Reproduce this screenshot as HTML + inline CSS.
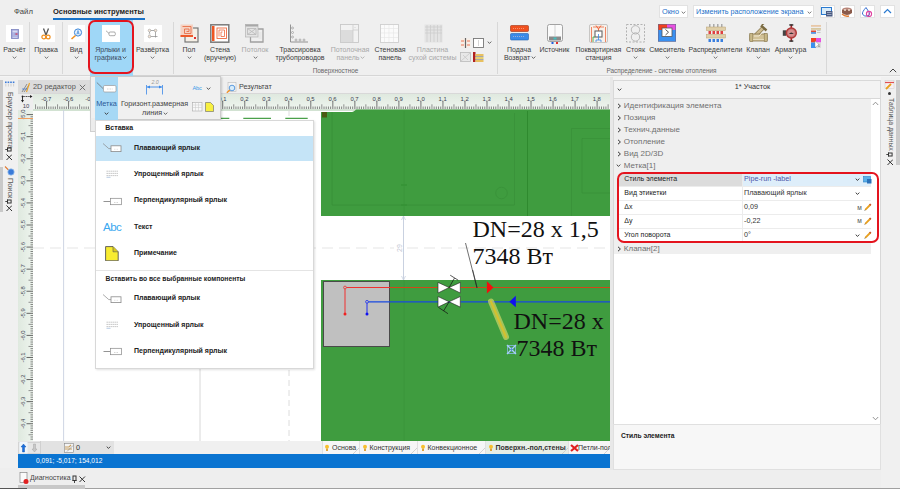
<!DOCTYPE html><html><head><meta charset="utf-8"><style>
html,body{margin:0;padding:0;}
body{width:900px;height:489px;overflow:hidden;position:relative;background:#eeeeee;font-family:"Liberation Sans", sans-serif;}
div{position:absolute;box-sizing:border-box;}
</style></head><body>
<div style="left:0px;top:0px;width:900px;height:76px;background:#efefef;"></div>
<div style="left:0px;top:75px;width:900px;height:1px;background:#d6d6d6;"></div>
<div style="left:0px;top:76px;width:900px;height:4px;background:#f4f4f4;"></div>
<div style="left:14px;top:6.88px;font-size:7.7px;line-height:9.24px;color:#444;font-weight:400;white-space:nowrap;">Файл</div>
<div style="left:53px;top:7.00px;font-size:7.5px;line-height:9.00px;color:#222;font-weight:700;white-space:nowrap;">Основные инструменты</div>
<div style="left:53px;top:18px;width:92px;height:2px;background:#1a73c8;"></div>
<div style="left:659px;top:5px;width:29px;height:12.5px;background:#fff;border:1px solid #e2e2e2;"></div>
<div style="left:662px;top:7.62px;font-size:7.3px;line-height:8.76px;color:#1a6fc8;font-weight:400;white-space:nowrap;">Окно</div>
<svg style="position:absolute;left:681.0px;top:10.5px;" width="5" height="3" viewBox="0 0 5 3"><path d="M0.7 0.6 L2.5 2.4 L4.3 0.6" fill="none" stroke="#666" stroke-width="0.9"/></svg>
<div style="left:693px;top:5px;width:121px;height:12.5px;background:#fff;border:1px solid #e2e2e2;"></div>
<div style="left:696px;top:7.68px;font-size:7.2px;line-height:8.64px;color:#1a6fc8;font-weight:400;white-space:nowrap;">Изменить расположение экрана</div>
<svg style="position:absolute;left:806.5px;top:10.5px;" width="5" height="3" viewBox="0 0 5 3"><path d="M0.7 0.6 L2.5 2.4 L4.3 0.6" fill="none" stroke="#666" stroke-width="0.9"/></svg>
<div style="left:819.5px;top:5px;width:15px;height:12.5px;background:#fff;border:1px solid #e2e2e2;"></div>
<div style="left:839.5px;top:5px;width:15px;height:12.5px;background:#fff;border:1px solid #e2e2e2;"></div>
<div style="left:859.5px;top:5px;width:15px;height:12.5px;background:#fff;border:1px solid #e2e2e2;"></div>
<div style="left:879.5px;top:5px;width:15px;height:12.5px;background:#fff;border:1px solid #e2e2e2;"></div>
<div style="left:29px;top:22px;width:1px;height:52px;background:#d8d8d8;"></div>
<div style="left:62px;top:22px;width:1px;height:52px;background:#d8d8d8;"></div>
<div style="left:173px;top:22px;width:1px;height:52px;background:#d8d8d8;"></div>
<div style="left:497px;top:22px;width:1px;height:52px;background:#d8d8d8;"></div>
<div style="left:826px;top:22px;width:1px;height:52px;background:#d8d8d8;"></div>
<div style="left:89.5px;top:20px;width:43px;height:57px;background:#9fd7f7;"></div>
<div style="left:87.5px;top:20px;width:46px;height:53.5px;border:2px solid #e4141e;border-radius:7px;"></div>
<div style="left:5.5px;top:25px;width:17.5px;height:17px;background:#ffffff;"></div>
<div style="left:37.5px;top:25px;width:17.5px;height:17px;background:#ffffff;"></div>
<div style="left:67.5px;top:25px;width:17.5px;height:17px;background:#ffffff;"></div>
<div style="left:102px;top:25px;width:17.5px;height:17px;background:#ffffff;"></div>
<div style="left:144px;top:25px;width:17.5px;height:17px;background:#ffffff;"></div>
<svg style="position:absolute;left:11px;top:28.5px;" width="8" height="10" viewBox="0 0 8 10"><rect x="0.5" y="0.5" width="7" height="9" fill="#9aa0d8" stroke="#7e84c0" stroke-width="0.8"/><rect x="1.5" y="1.5" width="5" height="2" fill="#d9dcf2"/><rect x="4.5" y="4.3" width="2" height="1.5" fill="#d05070"/><path d="M1.5 5 h2 M1.5 7 h5 M1.5 8.5 h5" stroke="#e8e8f8" stroke-width="0.6"/></svg>
<div style="left:-135.5px;top:45.80px;width:300px;text-align:center;font-size:7px;line-height:8.40px;color:#3c3c3c;font-weight:400;white-space:nowrap;">Расчёт</div>
<svg style="position:absolute;left:12.0px;top:56.0px;" width="5" height="3" viewBox="0 0 5 3"><path d="M0.7 0.6 L2.5 2.4 L4.3 0.6" fill="none" stroke="#666" stroke-width="0.9"/></svg>
<svg style="position:absolute;left:41px;top:28px;" width="10" height="12" viewBox="0 0 10 12"><path d="M2.5 0.5 L5 7 M7.5 0.5 L5 7" stroke="#555" stroke-width="1.3"/><circle cx="2.8" cy="9" r="1.9" fill="none" stroke="#f09020" stroke-width="1.2"/><circle cx="7.2" cy="9" r="1.9" fill="none" stroke="#f09020" stroke-width="1.2"/></svg>
<div style="left:-104px;top:45.80px;width:300px;text-align:center;font-size:7px;line-height:8.40px;color:#3c3c3c;font-weight:400;white-space:nowrap;">Правка</div>
<svg style="position:absolute;left:43.5px;top:56.0px;" width="5" height="3" viewBox="0 0 5 3"><path d="M0.7 0.6 L2.5 2.4 L4.3 0.6" fill="none" stroke="#666" stroke-width="0.9"/></svg>
<svg style="position:absolute;left:70px;top:28px;" width="13" height="12" viewBox="0 0 13 12"><circle cx="8" cy="4.5" r="3.6" fill="#e8f2fc" stroke="#3a86d8" stroke-width="1"/><path d="M6.8 6.5 L8 2.5 L9.2 6.5 M7.2 5.3 h1.6" stroke="#3a86d8" stroke-width="0.7" fill="none"/><path d="M5.5 7.5 L1.5 11" stroke="#f09020" stroke-width="1.6"/></svg>
<div style="left:-74px;top:45.80px;width:300px;text-align:center;font-size:7px;line-height:8.40px;color:#3c3c3c;font-weight:400;white-space:nowrap;">Вид</div>
<svg style="position:absolute;left:73.5px;top:56.0px;" width="5" height="3" viewBox="0 0 5 3"><path d="M0.7 0.6 L2.5 2.4 L4.3 0.6" fill="none" stroke="#666" stroke-width="0.9"/></svg>
<svg style="position:absolute;left:104px;top:29px;" width="14" height="9" viewBox="0 0 14 9"><path d="M2 1.8 L5.5 4.8" stroke="#777" stroke-width="0.6"/><rect x="5" y="3" width="6.3" height="3.7" rx="1.2" fill="#fff" stroke="#888" stroke-width="0.7"/></svg>
<div style="left:-39.5px;top:45.80px;width:300px;text-align:center;font-size:7px;line-height:8.40px;color:#3c4a5c;font-weight:400;white-space:nowrap;">Ярлыки и</div>
<div style="left:-42px;top:53.60px;width:300px;text-align:center;font-size:7px;line-height:8.40px;color:#3c4a5c;font-weight:400;white-space:nowrap;">графика</div>
<svg style="position:absolute;left:122.0px;top:56.3px;" width="5" height="3" viewBox="0 0 5 3"><path d="M0.7 0.6 L2.5 2.4 L4.3 0.6" fill="none" stroke="#444" stroke-width="0.9"/></svg>
<svg style="position:absolute;left:147px;top:28px;" width="12" height="12" viewBox="0 0 12 12"><path d="M2.5 2.5 H8.5 M8.5 2.5 V9.5 M2.5 8.5 H10.5 M2.5 4 V5.5" fill="none" stroke="#8a8a8a" stroke-width="0.7"/><g fill="#f8e8d8" stroke="#999" stroke-width="0.6"><circle cx="2.5" cy="2.5" r="1.3"/><circle cx="8.5" cy="2.5" r="1.3"/><circle cx="2.5" cy="8.5" r="1.3"/></g><path d="M1.5 6 h2" stroke="#aaa" stroke-width="0.6"/></svg>
<div style="left:2.5px;top:45.80px;width:300px;text-align:center;font-size:7px;line-height:8.40px;color:#3c3c3c;font-weight:400;white-space:nowrap;">Развёртка</div>
<svg style="position:absolute;left:150.0px;top:56.0px;" width="5" height="3" viewBox="0 0 5 3"><path d="M0.7 0.6 L2.5 2.4 L4.3 0.6" fill="none" stroke="#666" stroke-width="0.9"/></svg>
<svg style="position:absolute;left:180px;top:24px;" width="20" height="19" viewBox="0 0 20 19"><rect x="5" y="4" width="13" height="14" fill="#f5efe6" stroke="#777" stroke-width="1.2"/><path d="M14 15 l2 -2 M14 13 l2 2" stroke="#e03030" stroke-width="1"/><rect x="0.5" y="0.5" width="12.5" height="12.5" fill="#f6d2c2"/><rect x="0.5" y="11" width="12.5" height="2" fill="#ee5a2a"/><path d="M2.5 2.5 h8.5 v7 h-6.5 v-4.5 h4.5 v2.5 h-2.5" fill="none" stroke="#e8704a" stroke-width="0.9"/></svg>
<div style="left:39px;top:45.80px;width:300px;text-align:center;font-size:7px;line-height:8.40px;color:#3c3c3c;font-weight:400;white-space:nowrap;">Пол</div>
<svg style="position:absolute;left:186.5px;top:56.0px;" width="5" height="3" viewBox="0 0 5 3"><path d="M0.7 0.6 L2.5 2.4 L4.3 0.6" fill="none" stroke="#666" stroke-width="0.9"/></svg>
<svg style="position:absolute;left:210px;top:24px;" width="20" height="19" viewBox="0 0 20 19"><rect x="0.8" y="0.8" width="18" height="17.4" fill="#fff" stroke="#7a7a7a" stroke-width="1.5"/><rect x="2" y="2" width="2.5" height="15" fill="#ee5522"/><rect x="7" y="4" width="9.5" height="10.5" fill="none" stroke="#ee6a40" stroke-width="0.9"/><path d="M9 12.5 v-6.5 h5.5 v6.5 h-3.5 v-4.5 h1.5" fill="none" stroke="#ee6a40" stroke-width="0.8"/></svg>
<div style="left:70px;top:45.80px;width:300px;text-align:center;font-size:7px;line-height:8.40px;color:#3c3c3c;font-weight:400;white-space:nowrap;">Стена</div>
<div style="left:70px;top:53.60px;width:300px;text-align:center;font-size:7px;line-height:8.40px;color:#3c3c3c;font-weight:400;white-space:nowrap;">(вручную)</div>
<svg style="position:absolute;left:245px;top:24px;" width="20" height="19" viewBox="0 0 20 19"><path d="M5.5 13 V18 H18 V5 H13" fill="none" stroke="#a0a0a0" stroke-width="1.3"/><rect x="13.5" y="8" width="3" height="7" fill="#e8e8e8"/><rect x="0.5" y="0.5" width="12.5" height="12.5" fill="#e4e4e4" stroke="#b4b4b4" stroke-width="0.7"/><rect x="0.5" y="0.5" width="12.5" height="2" fill="#a8a8a8"/><path d="M2.5 4.5 h8.5 v6 h-8.5 z M2.5 4.5 l8.5 6 M11 4.5 l-8.5 6" fill="none" stroke="#b8b8b8" stroke-width="0.8"/></svg>
<div style="left:105px;top:45.80px;width:300px;text-align:center;font-size:7px;line-height:8.40px;color:#a8a8a8;font-weight:400;white-space:nowrap;">Потолок</div>
<svg style="position:absolute;left:252.5px;top:56.0px;" width="5" height="3" viewBox="0 0 5 3"><path d="M0.7 0.6 L2.5 2.4 L4.3 0.6" fill="none" stroke="#666" stroke-width="0.9"/></svg>
<svg style="position:absolute;left:289px;top:24px;" width="20" height="19" viewBox="0 0 20 19"><path d="M1.5 0.5 V18 H19" fill="none" stroke="#888" stroke-width="0.9"/><g fill="none" stroke="#999" stroke-width="0.7"><circle cx="3.5" cy="4" r="1"/><circle cx="3.5" cy="8.5" r="1"/><circle cx="3.5" cy="13" r="1"/><circle cx="7" cy="16" r="1"/><circle cx="11" cy="16" r="1"/><circle cx="15" cy="16" r="1"/></g></svg>
<div style="left:150px;top:45.80px;width:300px;text-align:center;font-size:7px;line-height:8.40px;color:#3c3c3c;font-weight:400;white-space:nowrap;">Трассировка</div>
<div style="left:150px;top:53.60px;width:300px;text-align:center;font-size:7px;line-height:8.40px;color:#3c3c3c;font-weight:400;white-space:nowrap;">трубопроводов</div>
<svg style="position:absolute;left:340px;top:24px;" width="19" height="19" viewBox="0 0 19 19"><rect x="0.5" y="0.5" width="18" height="18" fill="#f2f2f2" stroke="#c8c8c8" stroke-width="0.9"/><rect x="1" y="6" width="12" height="12" fill="#dcdcdc"/><path d="M13 1 v17 M13 6 h5 M15 3 v1" stroke="#c8c8c8" stroke-width="0.7"/></svg>
<div style="left:200px;top:45.80px;width:300px;text-align:center;font-size:7px;line-height:8.40px;color:#a8a8a8;font-weight:400;white-space:nowrap;">Потолочная</div>
<div style="left:198px;top:53.60px;width:300px;text-align:center;font-size:7px;line-height:8.40px;color:#a8a8a8;font-weight:400;white-space:nowrap;">панель</div>
<svg style="position:absolute;left:360.0px;top:56.3px;" width="5" height="3" viewBox="0 0 5 3"><path d="M0.7 0.6 L2.5 2.4 L4.3 0.6" fill="none" stroke="#aaa" stroke-width="0.9"/></svg>
<svg style="position:absolute;left:380px;top:24px;" width="19" height="19" viewBox="0 0 19 19"><rect x="0.5" y="0.5" width="18" height="18" fill="#fbfbfb" stroke="#cfcfcf" stroke-width="0.9"/><path d="M4.5 1 v17 M9 1 v17 M13.5 1 v17 M1 4.5 h17 M1 9 h17 M1 13.5 h17" stroke="#e6e6e6" stroke-width="0.6"/></svg>
<div style="left:240px;top:45.80px;width:300px;text-align:center;font-size:7px;line-height:8.40px;color:#3c3c3c;font-weight:400;white-space:nowrap;">Стеновая</div>
<div style="left:240px;top:53.60px;width:300px;text-align:center;font-size:7px;line-height:8.40px;color:#3c3c3c;font-weight:400;white-space:nowrap;">панель</div>
<svg style="position:absolute;left:424px;top:24px;" width="19" height="19" viewBox="0 0 19 19"><rect x="0.5" y="0.5" width="18" height="18" fill="#e4e4e4"/><path d="M3 1 v17 M6.5 1 v17 M10 1 v17 M13.5 1 v17 M17 1 v17 M1 3 h17 M1 6 h17 M1 9 h17" stroke="#cdcdcd" stroke-width="0.8"/></svg>
<div style="left:282.5px;top:45.80px;width:300px;text-align:center;font-size:7px;line-height:8.40px;color:#a8a8a8;font-weight:400;white-space:nowrap;">Пластина</div>
<div style="left:282.5px;top:53.60px;width:300px;text-align:center;font-size:7px;line-height:8.40px;color:#a8a8a8;font-weight:400;white-space:nowrap;">сухой системы</div>
<svg style="position:absolute;left:460px;top:37.5px;" width="11" height="10" viewBox="0 0 11 10"><rect x="0.5" y="0.5" width="10" height="9" fill="#f8eee6"/><path d="M5.5 0 v10" stroke="#666" stroke-width="1.2"/><path d="M1 3 h3 M7 3 h3 M1 7 h3 M7 7 h3" stroke="#e86a4a" stroke-width="0.9"/></svg>
<svg style="position:absolute;left:473px;top:37.5px;" width="11" height="10" viewBox="0 0 11 10"><rect x="0.5" y="0.5" width="10" height="9" fill="#fff" stroke="#777" stroke-width="0.9"/><path d="M5.5 2 v6" stroke="#bbb" stroke-width="0.6"/></svg>
<svg style="position:absolute;left:486.5px;top:41.0px;" width="5" height="3" viewBox="0 0 5 3"><path d="M0.7 0.6 L2.5 2.4 L4.3 0.6" fill="none" stroke="#555" stroke-width="0.9"/></svg>
<svg style="position:absolute;left:460px;top:52px;" width="11" height="10" viewBox="0 0 11 10"><rect x="0.5" y="0.5" width="10" height="9" fill="#e8e8e8" stroke="#bbb" stroke-width="0.8"/><path d="M1 9 L10 1 M3 3 L8 8" stroke="#c8c8c8" stroke-width="0.8"/></svg>
<svg style="position:absolute;left:473px;top:52px;" width="11" height="10" viewBox="0 0 11 10"><rect x="0" y="0" width="2.5" height="10" fill="#b02020"/><rect x="2.5" y="2" width="8" height="2" fill="#e8c060"/><rect x="2.5" y="5" width="8" height="2" fill="#e8d070"/><rect x="2.5" y="8" width="8" height="2" fill="#e8c060"/><path d="M2.5 4.5 h8 M2.5 7.5 h8" stroke="#777" stroke-width="0.6"/></svg>
<svg style="position:absolute;left:510px;top:25px;" width="19" height="16" viewBox="0 0 19 16"><rect x="0.5" y="0.5" width="18" height="6" rx="1" fill="#f0501e" stroke="#a03010" stroke-width="0.6"/><rect x="0.5" y="8.5" width="18" height="6.5" rx="1" fill="#3a8ae8" stroke="#2060b0" stroke-width="0.6"/><path d="M3 3.5 h12 M3 11.5 h12" stroke="#ffd0c0" stroke-width="0.5" stroke-dasharray="1 1"/></svg>
<div style="left:369px;top:45.80px;width:300px;text-align:center;font-size:7px;line-height:8.40px;color:#3c3c3c;font-weight:400;white-space:nowrap;">Подача</div>
<div style="left:367px;top:53.60px;width:300px;text-align:center;font-size:7px;line-height:8.40px;color:#3c3c3c;font-weight:400;white-space:nowrap;">Возврат</div>
<svg style="position:absolute;left:530.8px;top:56.3px;" width="5" height="3" viewBox="0 0 5 3"><path d="M0.7 0.6 L2.5 2.4 L4.3 0.6" fill="none" stroke="#555" stroke-width="0.9"/></svg>
<svg style="position:absolute;left:547px;top:24px;" width="16" height="20" viewBox="0 0 16 20"><rect x="0.5" y="0.5" width="15" height="17" rx="2" fill="#fafafa" stroke="#999" stroke-width="0.9"/><path d="M8 1 v11" stroke="#bbb" stroke-width="0.6"/><rect x="2" y="12.5" width="12" height="4" fill="#8a8a8a"/><rect x="6.5" y="13.5" width="3" height="2" fill="#40c0c0"/><rect x="4.5" y="18" width="2" height="2" fill="#2060e0"/><rect x="9" y="18" width="2" height="2" fill="#e03030"/></svg>
<div style="left:404.5px;top:45.80px;width:300px;text-align:center;font-size:7px;line-height:8.40px;color:#3c3c3c;font-weight:400;white-space:nowrap;">Источник</div>
<svg style="position:absolute;left:589px;top:24px;" width="19" height="19" viewBox="0 0 19 19"><rect x="0.5" y="0.5" width="18" height="18" rx="1.5" fill="#f6f0ea" stroke="#aaa" stroke-width="0.6"/><path d="M2.5 18 V3 M16.5 18 V3 M4 3 h11" stroke="#ee6a40" stroke-width="0.8" fill="none"/><path d="M7 1.5 L9.5 5 L12 1.5 M9.5 5 v2" stroke="#ee5a30" stroke-width="0.9" fill="none"/><rect x="6" y="7" width="7" height="6" fill="#fff" stroke="#666" stroke-width="1.1"/><path d="M4 18 v-5 h2" stroke="#30a040" stroke-width="0.8" fill="none"/><path d="M9.5 10 v6 M7 16 h5 M7 16 v2 M12 16 v2" stroke="#3a8ae8" stroke-width="0.8" fill="none"/></svg>
<div style="left:448.5px;top:45.80px;width:300px;text-align:center;font-size:7px;line-height:8.40px;color:#3c3c3c;font-weight:400;white-space:nowrap;">Поквартирная</div>
<div style="left:448.5px;top:53.60px;width:300px;text-align:center;font-size:7px;line-height:8.40px;color:#3c3c3c;font-weight:400;white-space:nowrap;">станция</div>
<svg style="position:absolute;left:626px;top:24px;" width="19" height="19" viewBox="0 0 19 19"><rect x="0.5" y="0.5" width="18" height="17.5" fill="none" stroke="#aaa" stroke-width="0.9" stroke-dasharray="2 1.5"/><circle cx="9.5" cy="5.8" r="4.2" fill="none" stroke="#aaa" stroke-width="0.8"/><circle cx="9.5" cy="13" r="4.2" fill="none" stroke="#aaa" stroke-width="0.8"/></svg>
<div style="left:485.5px;top:45.80px;width:300px;text-align:center;font-size:7px;line-height:8.40px;color:#3c3c3c;font-weight:400;white-space:nowrap;">Стояк</div>
<svg style="position:absolute;left:633.0px;top:56.0px;" width="5" height="3" viewBox="0 0 5 3"><path d="M0.7 0.6 L2.5 2.4 L4.3 0.6" fill="none" stroke="#666" stroke-width="0.9"/></svg>
<svg style="position:absolute;left:658px;top:24px;" width="18" height="18" viewBox="0 0 18 18"><rect x="0" y="0" width="9" height="6" fill="#f04020"/><rect x="9" y="0" width="9" height="6" fill="#e850e0"/><rect x="0" y="6" width="18" height="11.5" fill="#3a90f0"/><rect x="0.3" y="0.3" width="17.4" height="17" fill="none" stroke="#6a6a8a" stroke-width="0.6"/><rect x="4" y="4" width="10" height="8.5" fill="#fff" stroke="#555" stroke-width="0.8"/><path d="M7.5 5.5 L10.5 8.2 L7.5 11" fill="none" stroke="#555" stroke-width="1"/></svg>
<div style="left:517px;top:45.80px;width:300px;text-align:center;font-size:7px;line-height:8.40px;color:#3c3c3c;font-weight:400;white-space:nowrap;">Смеситель</div>
<svg style="position:absolute;left:664.5px;top:56.0px;" width="5" height="3" viewBox="0 0 5 3"><path d="M0.7 0.6 L2.5 2.4 L4.3 0.6" fill="none" stroke="#666" stroke-width="0.9"/></svg>
<svg style="position:absolute;left:706px;top:24px;" width="20" height="19" viewBox="0 0 20 19"><g fill="#aaa"><rect x="3" y="0" width="1.5" height="3"/><rect x="7" y="0" width="1.5" height="3"/><rect x="11" y="0" width="1.5" height="3"/><rect x="15" y="0" width="1.5" height="3"/></g><rect x="0.5" y="3" width="19" height="3.5" fill="#e0cfa8" stroke="#b8a070" stroke-width="0.5"/><rect x="0.5" y="10.5" width="19" height="3.5" fill="#e0cfa8" stroke="#b8a070" stroke-width="0.5"/><g fill="#e04040"><rect x="2.5" y="7" width="2.5" height="3"/><rect x="6.5" y="7" width="2.5" height="3"/><rect x="10.5" y="7" width="2.5" height="3"/><rect x="14.5" y="7" width="2.5" height="3"/></g><g fill="#3a80e0"><rect x="2.5" y="15" width="2.5" height="3"/><rect x="6.5" y="15" width="2.5" height="3"/><rect x="10.5" y="15" width="2.5" height="3"/><rect x="14.5" y="15" width="2.5" height="3"/></g></svg>
<div style="left:565.5px;top:45.80px;width:300px;text-align:center;font-size:7px;line-height:8.40px;color:#3c3c3c;font-weight:400;white-space:nowrap;">Распределители</div>
<svg style="position:absolute;left:713.0px;top:56.0px;" width="5" height="3" viewBox="0 0 5 3"><path d="M0.7 0.6 L2.5 2.4 L4.3 0.6" fill="none" stroke="#666" stroke-width="0.9"/></svg>
<svg style="position:absolute;left:749px;top:24px;" width="19" height="18" viewBox="0 0 19 18"><path d="M5 13 L14.5 3.5" stroke="#8a7a50" stroke-width="4"/><path d="M5 13 L14.5 3.5" stroke="#cdbb90" stroke-width="2.6"/><path d="M12 1.5 L17.5 6.5" stroke="#7a6a40" stroke-width="2.4"/><path d="M13 1 L15 -0.5" stroke="#7a6a40" stroke-width="1.5"/><rect x="0.8" y="10" width="17.4" height="7" rx="0.8" fill="#d2c298" stroke="#8a7a50" stroke-width="0.8"/><rect x="0.8" y="9.5" width="3" height="8" fill="#c8b888" stroke="#8a7a50" stroke-width="0.6"/><rect x="15.2" y="9.5" width="3" height="8" fill="#c8b888" stroke="#8a7a50" stroke-width="0.6"/><path d="M5 12 L10 12 L13 9" stroke="#f4ecd8" stroke-width="0.9" fill="none"/><path d="M4 15.5 h11" stroke="#efe6cc" stroke-width="0.7"/></svg>
<div style="left:608px;top:45.80px;width:300px;text-align:center;font-size:7px;line-height:8.40px;color:#3c3c3c;font-weight:400;white-space:nowrap;">Клапан</div>
<svg style="position:absolute;left:755.5px;top:56.0px;" width="5" height="3" viewBox="0 0 5 3"><path d="M0.7 0.6 L2.5 2.4 L4.3 0.6" fill="none" stroke="#666" stroke-width="0.9"/></svg>
<svg style="position:absolute;left:782px;top:24px;" width="17" height="18" viewBox="0 0 17 18"><rect x="8.5" y="0.5" width="1.6" height="17" fill="#a02020"/><rect x="7.3" y="0.2" width="4" height="1.5" fill="#333"/><rect x="7.3" y="16.3" width="4" height="1.5" fill="#333"/><rect x="0.8" y="6.3" width="3.2" height="5.5" fill="#444"/><circle cx="9.3" cy="9" r="5" fill="#c87878" stroke="#b03838" stroke-width="1.4"/><circle cx="9.3" cy="9" r="3.2" fill="#d89090"/><path d="M6.8 10 Q9.3 6.8 11.8 10 Z" fill="#333"/></svg>
<div style="left:640.5px;top:45.80px;width:300px;text-align:center;font-size:7px;line-height:8.40px;color:#3c3c3c;font-weight:400;white-space:nowrap;">Арматура</div>
<svg style="position:absolute;left:788.0px;top:56.0px;" width="5" height="3" viewBox="0 0 5 3"><path d="M0.7 0.6 L2.5 2.4 L4.3 0.6" fill="none" stroke="#666" stroke-width="0.9"/></svg>
<svg style="position:absolute;left:811px;top:24px;" width="10" height="10" viewBox="0 0 10 10"><rect x="0" y="0" width="10" height="10" fill="#eeeeee"/><rect x="0" y="1" width="10" height="1.8" fill="#e8c8a8"/><rect x="0" y="4" width="10" height="1.8" fill="#d8c8a0"/><rect x="0" y="6.5" width="5" height="1.5" fill="#e04a30"/><rect x="0" y="8.2" width="5" height="1.5" fill="#3a80e0"/><path d="M6 6.5 h3.5 M6 8.5 h3.5" stroke="#aaa" stroke-width="0.6"/></svg>
<svg style="position:absolute;left:811px;top:38px;" width="10" height="10" viewBox="0 0 10 10"><rect x="0" y="0" width="5" height="4.5" fill="#f04020"/><rect x="5" y="0" width="5" height="4.5" fill="#e850e0"/><rect x="0" y="4.5" width="5" height="5.5" fill="#3a90f0"/><rect x="5" y="4.5" width="5" height="5.5" fill="#dcdcdc"/><path d="M4 3 L8 6.5 L4 9.5 Z" fill="#fff" stroke="#888" stroke-width="0.4"/><path d="M7 7 h2 M7 8.5 h2" stroke="#777" stroke-width="0.5"/></svg>
<div style="left:185.5px;top:66.86px;width:300px;text-align:center;font-size:6.4px;line-height:7.68px;color:#666;font-weight:400;white-space:nowrap;">Поверхностное</div>
<div style="left:511.5px;top:66.86px;width:300px;text-align:center;font-size:6.4px;line-height:7.68px;color:#666;font-weight:400;white-space:nowrap;">Распределение - системы отопления</div>
<svg style="position:absolute;left:889px;top:68px;" width="8" height="5" viewBox="0 0 8 5"><path d="M0.8 4.2 L4 1 L7.2 4.2" fill="none" stroke="#444" stroke-width="1"/></svg>
<svg style="position:absolute;left:821px;top:6.5px;" width="12" height="10" viewBox="0 0 12 10"><rect x="0.5" y="0.5" width="10" height="7" fill="#d8ecfa" stroke="#2a7ad0" stroke-width="1"/><rect x="5" y="4" width="6.5" height="5.5" fill="#4a5a80"/><path d="M6 5.5 h4.5 M6 7.5 h4.5" stroke="#cfd8ea" stroke-width="0.6"/></svg>
<svg style="position:absolute;left:841px;top:6.5px;" width="12" height="10" viewBox="0 0 12 10"><ellipse cx="6" cy="3" rx="5" ry="2.5" fill="#b8867a"/><path d="M1 3 v3 q5 4 10 0 v-3" fill="#8a5a4a"/><circle cx="4" cy="3" r="1" fill="#f0e0d0"/><circle cx="8" cy="3" r="1" fill="#f0e0d0"/><path d="M1 7 q3 3 7 2" stroke="#e07a30" stroke-width="1.3" fill="none"/></svg>
<svg style="position:absolute;left:861px;top:6.5px;" width="12" height="10" viewBox="0 0 12 10"><path d="M5 0.5 Q1 5 1.5 7 Q3 10 6 9 Q9 9 8.5 6 Z" fill="none" stroke="#3a70d0" stroke-width="1"/><circle cx="8" cy="7" r="2.6" fill="none" stroke="#e040a0" stroke-width="1.1"/><path d="M8 5.5 v3" stroke="#e040a0" stroke-width="0.8"/></svg>
<svg style="position:absolute;left:883px;top:7.5px;" width="9" height="6" viewBox="0 0 9 6"><path d="M1 5 L4.5 1.5 L8 5" fill="none" stroke="#2a7ad0" stroke-width="1.2"/></svg>
<div style="left:0px;top:77px;width:18px;height:412px;background:#f0f0f0;"></div>
<div style="left:0px;top:80px;width:3px;height:80px;background:#c9c9c9;"></div>
<div style="left:0px;top:167px;width:3px;height:45px;background:#c9c9c9;"></div>
<svg style="position:absolute;left:5px;top:80.5px;" width="10" height="6" viewBox="0 0 10 6"><g fill="#3a7ad8"><rect x="0" y="0.5" width="1.6" height="1.6"/><rect x="2.6" y="0.5" width="1.6" height="1.6"/><rect x="5.2" y="0.5" width="1.6" height="1.6"/><rect x="7.8" y="0.5" width="1.6" height="1.6"/></g><path d="M0.8 3 v2.5 M3.4 3 v2.5 M6 3 v2.5 M8.6 3 v2.5" stroke="#bbb" stroke-width="0.6"/></svg>
<div style="left:13.5px;top:91.5px;transform-origin:0 0;transform:rotate(90deg);font-size:7.3px;line-height:8px;color:#555;white-space:nowrap;">Браузер проекта</div>
<svg style="position:absolute;left:5px;top:147px;" width="7" height="5" viewBox="0 0 7 5"><path d="M0.3 2.5 H2.5 M2.5 0.5 V4.5" stroke="#333" stroke-width="0.9"/><rect x="2.5" y="1" width="3.6" height="3" fill="none" stroke="#333" stroke-width="1"/></svg>
<svg style="position:absolute;left:5.5px;top:153.5px;" width="6.5" height="6.5" viewBox="0 0 6.5 6.5"><path d="M0.5 0.5 L6 6 M6 0.5 L0.5 6" stroke="#333" stroke-width="1"/></svg>
<svg style="position:absolute;left:4px;top:166px;" width="11" height="10" viewBox="0 0 11 10"><path d="M1 0.5 L4.5 4" stroke="#e07a30" stroke-width="1.1"/><circle cx="7" cy="6" r="3.2" fill="#3a7ad8" stroke="#9cc4f0" stroke-width="0.7"/></svg>
<div style="left:13.5px;top:178.3px;transform-origin:0 0;transform:rotate(90deg);font-size:7.3px;line-height:8px;color:#555;white-space:nowrap;">Поиск</div>
<svg style="position:absolute;left:5px;top:198.5px;" width="7" height="5" viewBox="0 0 7 5"><path d="M0.3 2.5 H2.5 M2.5 0.5 V4.5" stroke="#333" stroke-width="0.9"/><rect x="2.5" y="1" width="3.6" height="3" fill="none" stroke="#333" stroke-width="1"/></svg>
<svg style="position:absolute;left:5.5px;top:204.8px;" width="6.5" height="6.5" viewBox="0 0 6.5 6.5"><path d="M0.5 0.5 L6 6 M6 0.5 L0.5 6" stroke="#333" stroke-width="1"/></svg>
<div style="left:18px;top:77px;width:592px;height:17px;background:#efefef;"></div>
<div style="left:18px;top:80px;width:72px;height:14px;background:#dcdcdc;"></div>
<svg style="position:absolute;left:21px;top:81.5px;" width="10" height="11" viewBox="0 0 10 11"><path d="M1 10 L6 2 M3 10 L8 3" stroke="#777" stroke-width="0.8"/><path d="M8.5 1 L5.5 10" stroke="#e8a020" stroke-width="1.1"/><path d="M1 7 h5" stroke="#3a7ad8" stroke-width="0.7"/></svg>
<div style="left:33px;top:82.86px;font-size:7.4px;line-height:8.88px;color:#555;font-weight:400;white-space:nowrap;">2D редактор</div>
<svg style="position:absolute;left:79px;top:83.5px;" width="7" height="7" viewBox="0 0 7 7"><path d="M0.8 0.8 L6.2 6.2 M6.2 0.8 L0.8 6.2" stroke="#666" stroke-width="0.9"/></svg>
<svg style="position:absolute;left:226px;top:81.5px;" width="11" height="11" viewBox="0 0 11 11"><rect x="2" y="0.5" width="8" height="9" fill="#f4f4f4" stroke="#bbb" stroke-width="0.6"/><circle cx="6" cy="6" r="2.8" fill="#d8ecfa" stroke="#3a86d8" stroke-width="0.8"/><path d="M3.8 8 L0.8 10.8" stroke="#f09020" stroke-width="1.3"/></svg>
<div style="left:239px;top:82.98px;font-size:7.2px;line-height:8.64px;color:#444;font-weight:400;white-space:nowrap;">Результат</div>
<div style="left:18px;top:93px;width:592px;height:1px;background:#d8d8d8;"></div>
<div style="left:18px;top:94px;width:592px;height:16px;background:linear-gradient(#dfe9df,#f0f6f0);"></div>
<div style="left:18px;top:109px;width:592px;height:1.5px;background:#d2e2d2;"></div>
<div style="left:18px;top:110px;width:15px;height:331px;background:linear-gradient(90deg,#dfe9df,#edf4ed);"></div>
<div style="left:18px;top:94px;width:15px;height:16px;background:#eeeeee;"></div>
<svg style="position:absolute;left:20px;top:94px;" width="13" height="9" viewBox="0 0 13 9"><path d="M2.5 2.5 H11.5" stroke="#222" stroke-width="0.8" stroke-dasharray="1.2 0.5"/><path d="M2.5 2.5 V7" stroke="#222" stroke-width="0.9"/><path d="M1 6 L2.5 8.5 L4 6 Z" fill="#222"/><path d="M10 1 L12.5 2.5 L10 4 Z" fill="#222"/><circle cx="2.5" cy="2.5" r="0.9" fill="#222"/></svg>
<div style="left:-124px;top:102.96px;width:300px;text-align:center;font-size:5.9px;line-height:7.08px;color:#445;font-weight:400;white-space:nowrap;">10</div>
<svg style="position:absolute;left:0px;top:0px;" width="610" height="112" viewBox="0 0 610 112"><path d="M35.54 104.3 V109" stroke="#777" stroke-width="0.8"/><path d="M37.74 106.5 V109" stroke="#555" stroke-width="0.7"/><path d="M39.94 106.5 V109" stroke="#555" stroke-width="0.7"/><path d="M42.15 106.5 V109" stroke="#555" stroke-width="0.7"/><path d="M44.35 106.5 V109" stroke="#555" stroke-width="0.7"/><path d="M46.55 101 V109" stroke="#666" stroke-width="0.9"/><path d="M48.75 106.5 V109" stroke="#555" stroke-width="0.7"/><path d="M50.95 106.5 V109" stroke="#555" stroke-width="0.7"/><path d="M53.16 106.5 V109" stroke="#555" stroke-width="0.7"/><path d="M55.36 106.5 V109" stroke="#555" stroke-width="0.7"/><path d="M57.56 104.3 V109" stroke="#777" stroke-width="0.8"/><path d="M59.76 106.5 V109" stroke="#555" stroke-width="0.7"/><path d="M61.97 106.5 V109" stroke="#555" stroke-width="0.7"/><path d="M64.17 106.5 V109" stroke="#555" stroke-width="0.7"/><path d="M66.37 106.5 V109" stroke="#555" stroke-width="0.7"/><path d="M68.57 101 V109" stroke="#666" stroke-width="0.9"/><path d="M70.77 106.5 V109" stroke="#555" stroke-width="0.7"/><path d="M72.98 106.5 V109" stroke="#555" stroke-width="0.7"/><path d="M75.18 106.5 V109" stroke="#555" stroke-width="0.7"/><path d="M77.38 106.5 V109" stroke="#555" stroke-width="0.7"/><path d="M79.58 104.3 V109" stroke="#777" stroke-width="0.8"/><path d="M81.79 106.5 V109" stroke="#555" stroke-width="0.7"/><path d="M83.99 106.5 V109" stroke="#555" stroke-width="0.7"/><path d="M86.19 106.5 V109" stroke="#555" stroke-width="0.7"/><path d="M88.39 106.5 V109" stroke="#555" stroke-width="0.7"/><path d="M90.59 101 V109" stroke="#666" stroke-width="0.9"/><path d="M92.80 106.5 V109" stroke="#555" stroke-width="0.7"/><path d="M95.00 106.5 V109" stroke="#555" stroke-width="0.7"/><path d="M97.20 106.5 V109" stroke="#555" stroke-width="0.7"/><path d="M99.40 106.5 V109" stroke="#555" stroke-width="0.7"/><path d="M101.60 104.3 V109" stroke="#777" stroke-width="0.8"/><path d="M103.81 106.5 V109" stroke="#555" stroke-width="0.7"/><path d="M106.01 106.5 V109" stroke="#555" stroke-width="0.7"/><path d="M108.21 106.5 V109" stroke="#555" stroke-width="0.7"/><path d="M110.41 106.5 V109" stroke="#555" stroke-width="0.7"/><path d="M112.62 101 V109" stroke="#666" stroke-width="0.9"/><path d="M114.82 106.5 V109" stroke="#555" stroke-width="0.7"/><path d="M117.02 106.5 V109" stroke="#555" stroke-width="0.7"/><path d="M119.22 106.5 V109" stroke="#555" stroke-width="0.7"/><path d="M121.42 106.5 V109" stroke="#555" stroke-width="0.7"/><path d="M123.63 104.3 V109" stroke="#777" stroke-width="0.8"/><path d="M125.83 106.5 V109" stroke="#555" stroke-width="0.7"/><path d="M128.03 106.5 V109" stroke="#555" stroke-width="0.7"/><path d="M130.23 106.5 V109" stroke="#555" stroke-width="0.7"/><path d="M132.44 106.5 V109" stroke="#555" stroke-width="0.7"/><path d="M134.64 101 V109" stroke="#666" stroke-width="0.9"/><path d="M136.84 106.5 V109" stroke="#555" stroke-width="0.7"/><path d="M139.04 106.5 V109" stroke="#555" stroke-width="0.7"/><path d="M141.24 106.5 V109" stroke="#555" stroke-width="0.7"/><path d="M143.45 106.5 V109" stroke="#555" stroke-width="0.7"/><path d="M145.65 104.3 V109" stroke="#777" stroke-width="0.8"/><path d="M147.85 106.5 V109" stroke="#555" stroke-width="0.7"/><path d="M150.05 106.5 V109" stroke="#555" stroke-width="0.7"/><path d="M152.26 106.5 V109" stroke="#555" stroke-width="0.7"/><path d="M154.46 106.5 V109" stroke="#555" stroke-width="0.7"/><path d="M156.66 101 V109" stroke="#666" stroke-width="0.9"/><path d="M158.86 106.5 V109" stroke="#555" stroke-width="0.7"/><path d="M161.06 106.5 V109" stroke="#555" stroke-width="0.7"/><path d="M163.27 106.5 V109" stroke="#555" stroke-width="0.7"/><path d="M165.47 106.5 V109" stroke="#555" stroke-width="0.7"/><path d="M167.67 104.3 V109" stroke="#777" stroke-width="0.8"/><path d="M169.87 106.5 V109" stroke="#555" stroke-width="0.7"/><path d="M172.08 106.5 V109" stroke="#555" stroke-width="0.7"/><path d="M174.28 106.5 V109" stroke="#555" stroke-width="0.7"/><path d="M176.48 106.5 V109" stroke="#555" stroke-width="0.7"/><path d="M178.68 101 V109" stroke="#666" stroke-width="0.9"/><path d="M180.88 106.5 V109" stroke="#555" stroke-width="0.7"/><path d="M183.09 106.5 V109" stroke="#555" stroke-width="0.7"/><path d="M185.29 106.5 V109" stroke="#555" stroke-width="0.7"/><path d="M187.49 106.5 V109" stroke="#555" stroke-width="0.7"/><path d="M189.69 104.3 V109" stroke="#777" stroke-width="0.8"/><path d="M191.90 106.5 V109" stroke="#555" stroke-width="0.7"/><path d="M194.10 106.5 V109" stroke="#555" stroke-width="0.7"/><path d="M196.30 106.5 V109" stroke="#555" stroke-width="0.7"/><path d="M198.50 106.5 V109" stroke="#555" stroke-width="0.7"/><path d="M200.70 101 V109" stroke="#666" stroke-width="0.9"/><path d="M202.91 106.5 V109" stroke="#555" stroke-width="0.7"/><path d="M205.11 106.5 V109" stroke="#555" stroke-width="0.7"/><path d="M207.31 106.5 V109" stroke="#555" stroke-width="0.7"/><path d="M209.51 106.5 V109" stroke="#555" stroke-width="0.7"/><path d="M211.71 104.3 V109" stroke="#777" stroke-width="0.8"/><path d="M213.92 106.5 V109" stroke="#555" stroke-width="0.7"/><path d="M216.12 106.5 V109" stroke="#555" stroke-width="0.7"/><path d="M218.32 106.5 V109" stroke="#555" stroke-width="0.7"/><path d="M220.52 106.5 V109" stroke="#555" stroke-width="0.7"/><path d="M222.73 101 V109" stroke="#666" stroke-width="0.9"/><path d="M224.93 106.5 V109" stroke="#555" stroke-width="0.7"/><path d="M227.13 106.5 V109" stroke="#555" stroke-width="0.7"/><path d="M229.33 106.5 V109" stroke="#555" stroke-width="0.7"/><path d="M231.53 106.5 V109" stroke="#555" stroke-width="0.7"/><path d="M233.74 104.3 V109" stroke="#777" stroke-width="0.8"/><path d="M235.94 106.5 V109" stroke="#555" stroke-width="0.7"/><path d="M238.14 106.5 V109" stroke="#555" stroke-width="0.7"/><path d="M240.34 106.5 V109" stroke="#555" stroke-width="0.7"/><path d="M242.55 106.5 V109" stroke="#555" stroke-width="0.7"/><path d="M244.75 101 V109" stroke="#666" stroke-width="0.9"/><path d="M246.95 106.5 V109" stroke="#555" stroke-width="0.7"/><path d="M249.15 106.5 V109" stroke="#555" stroke-width="0.7"/><path d="M251.35 106.5 V109" stroke="#555" stroke-width="0.7"/><path d="M253.56 106.5 V109" stroke="#555" stroke-width="0.7"/><path d="M255.76 104.3 V109" stroke="#777" stroke-width="0.8"/><path d="M257.96 106.5 V109" stroke="#555" stroke-width="0.7"/><path d="M260.16 106.5 V109" stroke="#555" stroke-width="0.7"/><path d="M262.37 106.5 V109" stroke="#555" stroke-width="0.7"/><path d="M264.57 106.5 V109" stroke="#555" stroke-width="0.7"/><path d="M266.77 101 V109" stroke="#666" stroke-width="0.9"/><path d="M268.97 106.5 V109" stroke="#555" stroke-width="0.7"/><path d="M271.17 106.5 V109" stroke="#555" stroke-width="0.7"/><path d="M273.38 106.5 V109" stroke="#555" stroke-width="0.7"/><path d="M275.58 106.5 V109" stroke="#555" stroke-width="0.7"/><path d="M277.78 104.3 V109" stroke="#777" stroke-width="0.8"/><path d="M279.98 106.5 V109" stroke="#555" stroke-width="0.7"/><path d="M282.19 106.5 V109" stroke="#555" stroke-width="0.7"/><path d="M284.39 106.5 V109" stroke="#555" stroke-width="0.7"/><path d="M286.59 106.5 V109" stroke="#555" stroke-width="0.7"/><path d="M288.79 101 V109" stroke="#666" stroke-width="0.9"/><path d="M290.99 106.5 V109" stroke="#555" stroke-width="0.7"/><path d="M293.20 106.5 V109" stroke="#555" stroke-width="0.7"/><path d="M295.40 106.5 V109" stroke="#555" stroke-width="0.7"/><path d="M297.60 106.5 V109" stroke="#555" stroke-width="0.7"/><path d="M299.80 104.3 V109" stroke="#777" stroke-width="0.8"/><path d="M302.01 106.5 V109" stroke="#555" stroke-width="0.7"/><path d="M304.21 106.5 V109" stroke="#555" stroke-width="0.7"/><path d="M306.41 106.5 V109" stroke="#555" stroke-width="0.7"/><path d="M308.61 106.5 V109" stroke="#555" stroke-width="0.7"/><path d="M310.81 101 V109" stroke="#666" stroke-width="0.9"/><path d="M313.02 106.5 V109" stroke="#555" stroke-width="0.7"/><path d="M315.22 106.5 V109" stroke="#555" stroke-width="0.7"/><path d="M317.42 106.5 V109" stroke="#555" stroke-width="0.7"/><path d="M319.62 106.5 V109" stroke="#555" stroke-width="0.7"/><path d="M321.82 104.3 V109" stroke="#777" stroke-width="0.8"/><path d="M324.03 106.5 V109" stroke="#555" stroke-width="0.7"/><path d="M326.23 106.5 V109" stroke="#555" stroke-width="0.7"/><path d="M328.43 106.5 V109" stroke="#555" stroke-width="0.7"/><path d="M330.63 106.5 V109" stroke="#555" stroke-width="0.7"/><path d="M332.84 101 V109" stroke="#666" stroke-width="0.9"/><path d="M335.04 106.5 V109" stroke="#555" stroke-width="0.7"/><path d="M337.24 106.5 V109" stroke="#555" stroke-width="0.7"/><path d="M339.44 106.5 V109" stroke="#555" stroke-width="0.7"/><path d="M341.64 106.5 V109" stroke="#555" stroke-width="0.7"/><path d="M343.85 104.3 V109" stroke="#777" stroke-width="0.8"/><path d="M346.05 106.5 V109" stroke="#555" stroke-width="0.7"/><path d="M348.25 106.5 V109" stroke="#555" stroke-width="0.7"/><path d="M350.45 106.5 V109" stroke="#555" stroke-width="0.7"/><path d="M352.66 106.5 V109" stroke="#555" stroke-width="0.7"/><path d="M354.86 101 V109" stroke="#666" stroke-width="0.9"/><path d="M357.06 106.5 V109" stroke="#555" stroke-width="0.7"/><path d="M359.26 106.5 V109" stroke="#555" stroke-width="0.7"/><path d="M361.46 106.5 V109" stroke="#555" stroke-width="0.7"/><path d="M363.67 106.5 V109" stroke="#555" stroke-width="0.7"/><path d="M365.87 104.3 V109" stroke="#777" stroke-width="0.8"/><path d="M368.07 106.5 V109" stroke="#555" stroke-width="0.7"/><path d="M370.27 106.5 V109" stroke="#555" stroke-width="0.7"/><path d="M372.48 106.5 V109" stroke="#555" stroke-width="0.7"/><path d="M374.68 106.5 V109" stroke="#555" stroke-width="0.7"/><path d="M376.88 101 V109" stroke="#666" stroke-width="0.9"/><path d="M379.08 106.5 V109" stroke="#555" stroke-width="0.7"/><path d="M381.28 106.5 V109" stroke="#555" stroke-width="0.7"/><path d="M383.49 106.5 V109" stroke="#555" stroke-width="0.7"/><path d="M385.69 106.5 V109" stroke="#555" stroke-width="0.7"/><path d="M387.89 104.3 V109" stroke="#777" stroke-width="0.8"/><path d="M390.09 106.5 V109" stroke="#555" stroke-width="0.7"/><path d="M392.30 106.5 V109" stroke="#555" stroke-width="0.7"/><path d="M394.50 106.5 V109" stroke="#555" stroke-width="0.7"/><path d="M396.70 106.5 V109" stroke="#555" stroke-width="0.7"/><path d="M398.90 101 V109" stroke="#666" stroke-width="0.9"/><path d="M401.10 106.5 V109" stroke="#555" stroke-width="0.7"/><path d="M403.31 106.5 V109" stroke="#555" stroke-width="0.7"/><path d="M405.51 106.5 V109" stroke="#555" stroke-width="0.7"/><path d="M407.71 106.5 V109" stroke="#555" stroke-width="0.7"/><path d="M409.91 104.3 V109" stroke="#777" stroke-width="0.8"/><path d="M412.12 106.5 V109" stroke="#555" stroke-width="0.7"/><path d="M414.32 106.5 V109" stroke="#555" stroke-width="0.7"/><path d="M416.52 106.5 V109" stroke="#555" stroke-width="0.7"/><path d="M418.72 106.5 V109" stroke="#555" stroke-width="0.7"/><path d="M420.92 101 V109" stroke="#666" stroke-width="0.9"/><path d="M423.13 106.5 V109" stroke="#555" stroke-width="0.7"/><path d="M425.33 106.5 V109" stroke="#555" stroke-width="0.7"/><path d="M427.53 106.5 V109" stroke="#555" stroke-width="0.7"/><path d="M429.73 106.5 V109" stroke="#555" stroke-width="0.7"/><path d="M431.94 104.3 V109" stroke="#777" stroke-width="0.8"/><path d="M434.14 106.5 V109" stroke="#555" stroke-width="0.7"/><path d="M436.34 106.5 V109" stroke="#555" stroke-width="0.7"/><path d="M438.54 106.5 V109" stroke="#555" stroke-width="0.7"/><path d="M440.74 106.5 V109" stroke="#555" stroke-width="0.7"/><path d="M442.95 101 V109" stroke="#666" stroke-width="0.9"/><path d="M445.15 106.5 V109" stroke="#555" stroke-width="0.7"/><path d="M447.35 106.5 V109" stroke="#555" stroke-width="0.7"/><path d="M449.55 106.5 V109" stroke="#555" stroke-width="0.7"/><path d="M451.75 106.5 V109" stroke="#555" stroke-width="0.7"/><path d="M453.96 104.3 V109" stroke="#777" stroke-width="0.8"/><path d="M456.16 106.5 V109" stroke="#555" stroke-width="0.7"/><path d="M458.36 106.5 V109" stroke="#555" stroke-width="0.7"/><path d="M460.56 106.5 V109" stroke="#555" stroke-width="0.7"/><path d="M462.77 106.5 V109" stroke="#555" stroke-width="0.7"/><path d="M464.97 101 V109" stroke="#666" stroke-width="0.9"/><path d="M467.17 106.5 V109" stroke="#555" stroke-width="0.7"/><path d="M469.37 106.5 V109" stroke="#555" stroke-width="0.7"/><path d="M471.57 106.5 V109" stroke="#555" stroke-width="0.7"/><path d="M473.78 106.5 V109" stroke="#555" stroke-width="0.7"/><path d="M475.98 104.3 V109" stroke="#777" stroke-width="0.8"/><path d="M478.18 106.5 V109" stroke="#555" stroke-width="0.7"/><path d="M480.38 106.5 V109" stroke="#555" stroke-width="0.7"/><path d="M482.59 106.5 V109" stroke="#555" stroke-width="0.7"/><path d="M484.79 106.5 V109" stroke="#555" stroke-width="0.7"/><path d="M486.99 101 V109" stroke="#666" stroke-width="0.9"/><path d="M489.19 106.5 V109" stroke="#555" stroke-width="0.7"/><path d="M491.39 106.5 V109" stroke="#555" stroke-width="0.7"/><path d="M493.60 106.5 V109" stroke="#555" stroke-width="0.7"/><path d="M495.80 106.5 V109" stroke="#555" stroke-width="0.7"/><path d="M498.00 104.3 V109" stroke="#777" stroke-width="0.8"/><path d="M500.20 106.5 V109" stroke="#555" stroke-width="0.7"/><path d="M502.41 106.5 V109" stroke="#555" stroke-width="0.7"/><path d="M504.61 106.5 V109" stroke="#555" stroke-width="0.7"/><path d="M506.81 106.5 V109" stroke="#555" stroke-width="0.7"/><path d="M509.01 101 V109" stroke="#666" stroke-width="0.9"/><path d="M511.21 106.5 V109" stroke="#555" stroke-width="0.7"/><path d="M513.42 106.5 V109" stroke="#555" stroke-width="0.7"/><path d="M515.62 106.5 V109" stroke="#555" stroke-width="0.7"/><path d="M517.82 106.5 V109" stroke="#555" stroke-width="0.7"/><path d="M520.02 104.3 V109" stroke="#777" stroke-width="0.8"/><path d="M522.23 106.5 V109" stroke="#555" stroke-width="0.7"/><path d="M524.43 106.5 V109" stroke="#555" stroke-width="0.7"/><path d="M526.63 106.5 V109" stroke="#555" stroke-width="0.7"/><path d="M528.83 106.5 V109" stroke="#555" stroke-width="0.7"/><path d="M531.03 101 V109" stroke="#666" stroke-width="0.9"/><path d="M533.24 106.5 V109" stroke="#555" stroke-width="0.7"/><path d="M535.44 106.5 V109" stroke="#555" stroke-width="0.7"/><path d="M537.64 106.5 V109" stroke="#555" stroke-width="0.7"/><path d="M539.84 106.5 V109" stroke="#555" stroke-width="0.7"/><path d="M542.04 104.3 V109" stroke="#777" stroke-width="0.8"/><path d="M544.25 106.5 V109" stroke="#555" stroke-width="0.7"/><path d="M546.45 106.5 V109" stroke="#555" stroke-width="0.7"/><path d="M548.65 106.5 V109" stroke="#555" stroke-width="0.7"/><path d="M550.85 106.5 V109" stroke="#555" stroke-width="0.7"/><path d="M553.06 101 V109" stroke="#666" stroke-width="0.9"/><path d="M555.26 106.5 V109" stroke="#555" stroke-width="0.7"/><path d="M557.46 106.5 V109" stroke="#555" stroke-width="0.7"/><path d="M559.66 106.5 V109" stroke="#555" stroke-width="0.7"/><path d="M561.86 106.5 V109" stroke="#555" stroke-width="0.7"/><path d="M564.07 104.3 V109" stroke="#777" stroke-width="0.8"/><path d="M566.27 106.5 V109" stroke="#555" stroke-width="0.7"/><path d="M568.47 106.5 V109" stroke="#555" stroke-width="0.7"/><path d="M570.67 106.5 V109" stroke="#555" stroke-width="0.7"/><path d="M572.88 106.5 V109" stroke="#555" stroke-width="0.7"/><path d="M575.08 101 V109" stroke="#666" stroke-width="0.9"/><path d="M577.28 106.5 V109" stroke="#555" stroke-width="0.7"/><path d="M579.48 106.5 V109" stroke="#555" stroke-width="0.7"/><path d="M581.68 106.5 V109" stroke="#555" stroke-width="0.7"/><path d="M583.89 106.5 V109" stroke="#555" stroke-width="0.7"/><path d="M586.09 104.3 V109" stroke="#777" stroke-width="0.8"/><path d="M588.29 106.5 V109" stroke="#555" stroke-width="0.7"/><path d="M590.49 106.5 V109" stroke="#555" stroke-width="0.7"/><path d="M592.70 106.5 V109" stroke="#555" stroke-width="0.7"/><path d="M594.90 106.5 V109" stroke="#555" stroke-width="0.7"/><path d="M597.10 101 V109" stroke="#666" stroke-width="0.9"/><path d="M599.30 106.5 V109" stroke="#555" stroke-width="0.7"/><path d="M601.50 106.5 V109" stroke="#555" stroke-width="0.7"/><path d="M603.71 106.5 V109" stroke="#555" stroke-width="0.7"/><path d="M605.91 106.5 V109" stroke="#555" stroke-width="0.7"/><path d="M608.11 104.3 V109" stroke="#777" stroke-width="0.8"/><text x="46.25" y="101.2" text-anchor="middle" font-size="5.9" fill="#3a4050" font-family="Liberation Sans">-0,7</text><text x="68.27" y="101.2" text-anchor="middle" font-size="5.9" fill="#3a4050" font-family="Liberation Sans">-0,6</text><text x="90.29" y="101.2" text-anchor="middle" font-size="5.9" fill="#3a4050" font-family="Liberation Sans">-0,5</text><text x="112.32" y="101.2" text-anchor="middle" font-size="5.9" fill="#3a4050" font-family="Liberation Sans">-0,4</text><text x="134.34" y="101.2" text-anchor="middle" font-size="5.9" fill="#3a4050" font-family="Liberation Sans">-0,3</text><text x="156.36" y="101.2" text-anchor="middle" font-size="5.9" fill="#3a4050" font-family="Liberation Sans">-0,2</text><text x="178.38" y="101.2" text-anchor="middle" font-size="5.9" fill="#3a4050" font-family="Liberation Sans">-0,1</text><text x="200.40" y="101.2" text-anchor="middle" font-size="5.9" fill="#3a4050" font-family="Liberation Sans">0,0</text><text x="222.43" y="101.2" text-anchor="middle" font-size="5.9" fill="#3a4050" font-family="Liberation Sans">0,1</text><text x="244.45" y="101.2" text-anchor="middle" font-size="5.9" fill="#3a4050" font-family="Liberation Sans">0,2</text><text x="266.47" y="101.2" text-anchor="middle" font-size="5.9" fill="#3a4050" font-family="Liberation Sans">0,3</text><text x="288.49" y="101.2" text-anchor="middle" font-size="5.9" fill="#3a4050" font-family="Liberation Sans">0,4</text><text x="310.51" y="101.2" text-anchor="middle" font-size="5.9" fill="#3a4050" font-family="Liberation Sans">0,5</text><text x="332.54" y="101.2" text-anchor="middle" font-size="5.9" fill="#3a4050" font-family="Liberation Sans">0,6</text><text x="354.56" y="101.2" text-anchor="middle" font-size="5.9" fill="#3a4050" font-family="Liberation Sans">0,7</text><text x="376.58" y="101.2" text-anchor="middle" font-size="5.9" fill="#3a4050" font-family="Liberation Sans">0,8</text><text x="398.60" y="101.2" text-anchor="middle" font-size="5.9" fill="#3a4050" font-family="Liberation Sans">0,9</text><text x="420.62" y="101.2" text-anchor="middle" font-size="5.9" fill="#3a4050" font-family="Liberation Sans">1,0</text><text x="442.65" y="101.2" text-anchor="middle" font-size="5.9" fill="#3a4050" font-family="Liberation Sans">1,1</text><text x="464.67" y="101.2" text-anchor="middle" font-size="5.9" fill="#3a4050" font-family="Liberation Sans">1,2</text><text x="486.69" y="101.2" text-anchor="middle" font-size="5.9" fill="#3a4050" font-family="Liberation Sans">1,3</text><text x="508.71" y="101.2" text-anchor="middle" font-size="5.9" fill="#3a4050" font-family="Liberation Sans">1,4</text><text x="530.73" y="101.2" text-anchor="middle" font-size="5.9" fill="#3a4050" font-family="Liberation Sans">1,5</text><text x="552.76" y="101.2" text-anchor="middle" font-size="5.9" fill="#3a4050" font-family="Liberation Sans">1,6</text><text x="574.78" y="101.2" text-anchor="middle" font-size="5.9" fill="#3a4050" font-family="Liberation Sans">1,7</text><text x="596.80" y="101.2" text-anchor="middle" font-size="5.9" fill="#3a4050" font-family="Liberation Sans">1,8</text></svg>
<svg style="position:absolute;left:0px;top:0px;" width="34" height="441" viewBox="0 0 34 441"><path d="M26.5 114.60 H33" stroke="#555" stroke-width="0.9"/><path d="M30.5 116.81 H33" stroke="#555" stroke-width="0.7"/><path d="M30.5 119.02 H33" stroke="#555" stroke-width="0.7"/><path d="M30.5 121.22 H33" stroke="#555" stroke-width="0.7"/><path d="M30.5 123.43 H33" stroke="#555" stroke-width="0.7"/><path d="M28.5 125.64 H33" stroke="#777" stroke-width="0.8"/><path d="M30.5 127.85 H33" stroke="#555" stroke-width="0.7"/><path d="M30.5 130.06 H33" stroke="#555" stroke-width="0.7"/><path d="M30.5 132.26 H33" stroke="#555" stroke-width="0.7"/><path d="M30.5 134.47 H33" stroke="#555" stroke-width="0.7"/><path d="M26.5 136.68 H33" stroke="#555" stroke-width="0.9"/><path d="M30.5 138.89 H33" stroke="#555" stroke-width="0.7"/><path d="M30.5 141.10 H33" stroke="#555" stroke-width="0.7"/><path d="M30.5 143.30 H33" stroke="#555" stroke-width="0.7"/><path d="M30.5 145.51 H33" stroke="#555" stroke-width="0.7"/><path d="M28.5 147.72 H33" stroke="#777" stroke-width="0.8"/><path d="M30.5 149.93 H33" stroke="#555" stroke-width="0.7"/><path d="M30.5 152.14 H33" stroke="#555" stroke-width="0.7"/><path d="M30.5 154.34 H33" stroke="#555" stroke-width="0.7"/><path d="M30.5 156.55 H33" stroke="#555" stroke-width="0.7"/><path d="M26.5 158.76 H33" stroke="#555" stroke-width="0.9"/><path d="M30.5 160.97 H33" stroke="#555" stroke-width="0.7"/><path d="M30.5 163.18 H33" stroke="#555" stroke-width="0.7"/><path d="M30.5 165.38 H33" stroke="#555" stroke-width="0.7"/><path d="M30.5 167.59 H33" stroke="#555" stroke-width="0.7"/><path d="M28.5 169.80 H33" stroke="#777" stroke-width="0.8"/><path d="M30.5 172.01 H33" stroke="#555" stroke-width="0.7"/><path d="M30.5 174.22 H33" stroke="#555" stroke-width="0.7"/><path d="M30.5 176.42 H33" stroke="#555" stroke-width="0.7"/><path d="M30.5 178.63 H33" stroke="#555" stroke-width="0.7"/><path d="M26.5 180.84 H33" stroke="#555" stroke-width="0.9"/><path d="M30.5 183.05 H33" stroke="#555" stroke-width="0.7"/><path d="M30.5 185.26 H33" stroke="#555" stroke-width="0.7"/><path d="M30.5 187.46 H33" stroke="#555" stroke-width="0.7"/><path d="M30.5 189.67 H33" stroke="#555" stroke-width="0.7"/><path d="M28.5 191.88 H33" stroke="#777" stroke-width="0.8"/><path d="M30.5 194.09 H33" stroke="#555" stroke-width="0.7"/><path d="M30.5 196.30 H33" stroke="#555" stroke-width="0.7"/><path d="M30.5 198.50 H33" stroke="#555" stroke-width="0.7"/><path d="M30.5 200.71 H33" stroke="#555" stroke-width="0.7"/><path d="M26.5 202.92 H33" stroke="#555" stroke-width="0.9"/><path d="M30.5 205.13 H33" stroke="#555" stroke-width="0.7"/><path d="M30.5 207.34 H33" stroke="#555" stroke-width="0.7"/><path d="M30.5 209.54 H33" stroke="#555" stroke-width="0.7"/><path d="M30.5 211.75 H33" stroke="#555" stroke-width="0.7"/><path d="M28.5 213.96 H33" stroke="#777" stroke-width="0.8"/><path d="M30.5 216.17 H33" stroke="#555" stroke-width="0.7"/><path d="M30.5 218.38 H33" stroke="#555" stroke-width="0.7"/><path d="M30.5 220.58 H33" stroke="#555" stroke-width="0.7"/><path d="M30.5 222.79 H33" stroke="#555" stroke-width="0.7"/><path d="M26.5 225.00 H33" stroke="#555" stroke-width="0.9"/><path d="M30.5 227.21 H33" stroke="#555" stroke-width="0.7"/><path d="M30.5 229.42 H33" stroke="#555" stroke-width="0.7"/><path d="M30.5 231.62 H33" stroke="#555" stroke-width="0.7"/><path d="M30.5 233.83 H33" stroke="#555" stroke-width="0.7"/><path d="M28.5 236.04 H33" stroke="#777" stroke-width="0.8"/><path d="M30.5 238.25 H33" stroke="#555" stroke-width="0.7"/><path d="M30.5 240.46 H33" stroke="#555" stroke-width="0.7"/><path d="M30.5 242.66 H33" stroke="#555" stroke-width="0.7"/><path d="M30.5 244.87 H33" stroke="#555" stroke-width="0.7"/><path d="M26.5 247.08 H33" stroke="#555" stroke-width="0.9"/><path d="M30.5 249.29 H33" stroke="#555" stroke-width="0.7"/><path d="M30.5 251.50 H33" stroke="#555" stroke-width="0.7"/><path d="M30.5 253.70 H33" stroke="#555" stroke-width="0.7"/><path d="M30.5 255.91 H33" stroke="#555" stroke-width="0.7"/><path d="M28.5 258.12 H33" stroke="#777" stroke-width="0.8"/><path d="M30.5 260.33 H33" stroke="#555" stroke-width="0.7"/><path d="M30.5 262.54 H33" stroke="#555" stroke-width="0.7"/><path d="M30.5 264.74 H33" stroke="#555" stroke-width="0.7"/><path d="M30.5 266.95 H33" stroke="#555" stroke-width="0.7"/><path d="M26.5 269.16 H33" stroke="#555" stroke-width="0.9"/><path d="M30.5 271.37 H33" stroke="#555" stroke-width="0.7"/><path d="M30.5 273.58 H33" stroke="#555" stroke-width="0.7"/><path d="M30.5 275.78 H33" stroke="#555" stroke-width="0.7"/><path d="M30.5 277.99 H33" stroke="#555" stroke-width="0.7"/><path d="M28.5 280.20 H33" stroke="#777" stroke-width="0.8"/><path d="M30.5 282.41 H33" stroke="#555" stroke-width="0.7"/><path d="M30.5 284.62 H33" stroke="#555" stroke-width="0.7"/><path d="M30.5 286.82 H33" stroke="#555" stroke-width="0.7"/><path d="M30.5 289.03 H33" stroke="#555" stroke-width="0.7"/><path d="M26.5 291.24 H33" stroke="#555" stroke-width="0.9"/><path d="M30.5 293.45 H33" stroke="#555" stroke-width="0.7"/><path d="M30.5 295.66 H33" stroke="#555" stroke-width="0.7"/><path d="M30.5 297.86 H33" stroke="#555" stroke-width="0.7"/><path d="M30.5 300.07 H33" stroke="#555" stroke-width="0.7"/><path d="M28.5 302.28 H33" stroke="#777" stroke-width="0.8"/><path d="M30.5 304.49 H33" stroke="#555" stroke-width="0.7"/><path d="M30.5 306.70 H33" stroke="#555" stroke-width="0.7"/><path d="M30.5 308.90 H33" stroke="#555" stroke-width="0.7"/><path d="M30.5 311.11 H33" stroke="#555" stroke-width="0.7"/><path d="M26.5 313.32 H33" stroke="#555" stroke-width="0.9"/><path d="M30.5 315.53 H33" stroke="#555" stroke-width="0.7"/><path d="M30.5 317.74 H33" stroke="#555" stroke-width="0.7"/><path d="M30.5 319.94 H33" stroke="#555" stroke-width="0.7"/><path d="M30.5 322.15 H33" stroke="#555" stroke-width="0.7"/><path d="M28.5 324.36 H33" stroke="#777" stroke-width="0.8"/><path d="M30.5 326.57 H33" stroke="#555" stroke-width="0.7"/><path d="M30.5 328.78 H33" stroke="#555" stroke-width="0.7"/><path d="M30.5 330.98 H33" stroke="#555" stroke-width="0.7"/><path d="M30.5 333.19 H33" stroke="#555" stroke-width="0.7"/><path d="M26.5 335.40 H33" stroke="#555" stroke-width="0.9"/><path d="M30.5 337.61 H33" stroke="#555" stroke-width="0.7"/><path d="M30.5 339.82 H33" stroke="#555" stroke-width="0.7"/><path d="M30.5 342.02 H33" stroke="#555" stroke-width="0.7"/><path d="M30.5 344.23 H33" stroke="#555" stroke-width="0.7"/><path d="M28.5 346.44 H33" stroke="#777" stroke-width="0.8"/><path d="M30.5 348.65 H33" stroke="#555" stroke-width="0.7"/><path d="M30.5 350.86 H33" stroke="#555" stroke-width="0.7"/><path d="M30.5 353.06 H33" stroke="#555" stroke-width="0.7"/><path d="M30.5 355.27 H33" stroke="#555" stroke-width="0.7"/><path d="M26.5 357.48 H33" stroke="#555" stroke-width="0.9"/><path d="M30.5 359.69 H33" stroke="#555" stroke-width="0.7"/><path d="M30.5 361.90 H33" stroke="#555" stroke-width="0.7"/><path d="M30.5 364.10 H33" stroke="#555" stroke-width="0.7"/><path d="M30.5 366.31 H33" stroke="#555" stroke-width="0.7"/><path d="M28.5 368.52 H33" stroke="#777" stroke-width="0.8"/><path d="M30.5 370.73 H33" stroke="#555" stroke-width="0.7"/><path d="M30.5 372.94 H33" stroke="#555" stroke-width="0.7"/><path d="M30.5 375.14 H33" stroke="#555" stroke-width="0.7"/><path d="M30.5 377.35 H33" stroke="#555" stroke-width="0.7"/><path d="M26.5 379.56 H33" stroke="#555" stroke-width="0.9"/><path d="M30.5 381.77 H33" stroke="#555" stroke-width="0.7"/><path d="M30.5 383.98 H33" stroke="#555" stroke-width="0.7"/><path d="M30.5 386.18 H33" stroke="#555" stroke-width="0.7"/><path d="M30.5 388.39 H33" stroke="#555" stroke-width="0.7"/><path d="M28.5 390.60 H33" stroke="#777" stroke-width="0.8"/><path d="M30.5 392.81 H33" stroke="#555" stroke-width="0.7"/><path d="M30.5 395.02 H33" stroke="#555" stroke-width="0.7"/><path d="M30.5 397.22 H33" stroke="#555" stroke-width="0.7"/><path d="M30.5 399.43 H33" stroke="#555" stroke-width="0.7"/><path d="M26.5 401.64 H33" stroke="#555" stroke-width="0.9"/><path d="M30.5 403.85 H33" stroke="#555" stroke-width="0.7"/><path d="M30.5 406.06 H33" stroke="#555" stroke-width="0.7"/><path d="M30.5 408.26 H33" stroke="#555" stroke-width="0.7"/><path d="M30.5 410.47 H33" stroke="#555" stroke-width="0.7"/><path d="M28.5 412.68 H33" stroke="#777" stroke-width="0.8"/><path d="M30.5 414.89 H33" stroke="#555" stroke-width="0.7"/><path d="M30.5 417.10 H33" stroke="#555" stroke-width="0.7"/><path d="M30.5 419.30 H33" stroke="#555" stroke-width="0.7"/><path d="M30.5 421.51 H33" stroke="#555" stroke-width="0.7"/><path d="M26.5 423.72 H33" stroke="#555" stroke-width="0.9"/><path d="M30.5 425.93 H33" stroke="#555" stroke-width="0.7"/><path d="M30.5 428.14 H33" stroke="#555" stroke-width="0.7"/><path d="M30.5 430.34 H33" stroke="#555" stroke-width="0.7"/><path d="M30.5 432.55 H33" stroke="#555" stroke-width="0.7"/><path d="M28.5 434.76 H33" stroke="#777" stroke-width="0.8"/><path d="M30.5 436.97 H33" stroke="#555" stroke-width="0.7"/><path d="M30.5 439.18 H33" stroke="#555" stroke-width="0.7"/><text transform="translate(24.6 114.60) rotate(-90)" x="0" y="0" text-anchor="middle" font-size="5.8" fill="#3a4050" font-family="Liberation Sans">-5,0</text><text transform="translate(24.6 136.68) rotate(-90)" x="0" y="0" text-anchor="middle" font-size="5.8" fill="#3a4050" font-family="Liberation Sans">-5,1</text><text transform="translate(24.6 158.76) rotate(-90)" x="0" y="0" text-anchor="middle" font-size="5.8" fill="#3a4050" font-family="Liberation Sans">-5,2</text><text transform="translate(24.6 180.84) rotate(-90)" x="0" y="0" text-anchor="middle" font-size="5.8" fill="#3a4050" font-family="Liberation Sans">-5,3</text><text transform="translate(24.6 202.92) rotate(-90)" x="0" y="0" text-anchor="middle" font-size="5.8" fill="#3a4050" font-family="Liberation Sans">-5,4</text><text transform="translate(24.6 225.00) rotate(-90)" x="0" y="0" text-anchor="middle" font-size="5.8" fill="#3a4050" font-family="Liberation Sans">-5,5</text><text transform="translate(24.6 247.08) rotate(-90)" x="0" y="0" text-anchor="middle" font-size="5.8" fill="#3a4050" font-family="Liberation Sans">-5,6</text><text transform="translate(24.6 269.16) rotate(-90)" x="0" y="0" text-anchor="middle" font-size="5.8" fill="#3a4050" font-family="Liberation Sans">-5,7</text><text transform="translate(24.6 291.24) rotate(-90)" x="0" y="0" text-anchor="middle" font-size="5.8" fill="#3a4050" font-family="Liberation Sans">-5,8</text><text transform="translate(24.6 313.32) rotate(-90)" x="0" y="0" text-anchor="middle" font-size="5.8" fill="#3a4050" font-family="Liberation Sans">-5,9</text><text transform="translate(24.6 335.40) rotate(-90)" x="0" y="0" text-anchor="middle" font-size="5.8" fill="#3a4050" font-family="Liberation Sans">-6,0</text><text transform="translate(24.6 357.48) rotate(-90)" x="0" y="0" text-anchor="middle" font-size="5.8" fill="#3a4050" font-family="Liberation Sans">-6,1</text><text transform="translate(24.6 379.56) rotate(-90)" x="0" y="0" text-anchor="middle" font-size="5.8" fill="#3a4050" font-family="Liberation Sans">-6,2</text><text transform="translate(24.6 401.64) rotate(-90)" x="0" y="0" text-anchor="middle" font-size="5.8" fill="#3a4050" font-family="Liberation Sans">-6,3</text><text transform="translate(24.6 423.72) rotate(-90)" x="0" y="0" text-anchor="middle" font-size="5.8" fill="#3a4050" font-family="Liberation Sans">-6,4</text></svg>
<div style="left:18px;top:118.2px;width:15px;height:1px;background:#f0a060;"></div>
<div style="left:33px;top:110.5px;width:577px;height:330.5px;background:#ffffff;"></div>
<svg style="position:absolute;left:33px;top:110px;" width="577" height="331" viewBox="0 0 577 331"><path d="M30.6 0 V331" stroke="#c8d0e0" stroke-width="0.9"/><path d="M167 0 V331" stroke="#d4d4d4" stroke-width="0.9"/><path d="M256 0 V331" stroke="#d8d8d8" stroke-width="0.9" stroke-dasharray="6 4"/><path d="M370.5 0 V331" stroke="#c8d0e0" stroke-width="0.9"/><path d="M0 138 H577" stroke="#e2e2e2" stroke-width="0.9" stroke-dasharray="11 6"/></svg>
<svg style="position:absolute;left:215px;top:116px;" width="100" height="4" viewBox="0 0 100 4"><path d="M5.5 2.3 H14.3 M28.3 2.3 H56 M70.3 2.3 H92.7" stroke="#4aa04a" stroke-width="1.2"/></svg>
<div style="left:321px;top:112px;width:289px;height:104px;background:#3f9c3f;"></div>
<svg style="position:absolute;left:321px;top:108.5px;" width="289" height="4" viewBox="0 0 289 4"><path d="M27 3.5 Q33 3.5 35 0.5 H289 V4 H27 Z" fill="#3f9c3f"/></svg>
<div style="left:321px;top:280px;width:289px;height:161px;background:#3f9c3f;"></div>
<svg style="position:absolute;left:321px;top:110px;" width="289" height="331" viewBox="0 0 289 331"><rect x="1" y="2" width="5" height="5.5" fill="#4a5a12"/><path d="M11 2 V95 H193.5 V3" fill="none" stroke="#389038" stroke-width="0.8"/><path d="M206.5 1 V106" stroke="#2f8a2f" stroke-width="1"/><path d="M83 1 V106 M83 170 V331" stroke="#3a943a" stroke-width="0.8"/><path d="M250.5 106 V18.5 H289" fill="none" stroke="#389038" stroke-width="0.8"/><path d="M289 28.5 H261 V83 H289" fill="none" stroke="#389038" stroke-width="0.7"/><circle cx="180.5" cy="83" r="5.8" fill="none" stroke="#389038" stroke-width="0.8"/><path d="M80 75 h6 M80 95 h6" stroke="#369236" stroke-width="1.5"/></svg>
<svg style="position:absolute;left:394px;top:240px;" width="10" height="16" viewBox="0 0 10 16"><rect x="0" y="0" width="9" height="16" fill="#fff"/><text transform="translate(7.6 8) rotate(-90)" x="0" y="0" text-anchor="middle" font-size="7" fill="#c4c8d4" font-family="Liberation Sans">29</text></svg>
<svg style="position:absolute;left:400px;top:216px;" width="8" height="64" viewBox="0 0 8 64"><path d="M3.5 0 V64" stroke="#c8d0e0" stroke-width="0.9"/><path d="M1.5 4 L3.5 0 L5.5 4 M1.5 60 L3.5 64 L5.5 60" fill="none" stroke="#c8d0e0" stroke-width="0.8"/></svg>
<div style="left:323px;top:280.7px;width:67px;height:66.5px;background:#c0c0c0;border:1px solid #4a4a4a;"></div>
<svg style="position:absolute;left:321px;top:270px;" width="289" height="80" viewBox="0 0 289 80"><path d="M24 17.5 H289" stroke="#d04818" stroke-width="1"/><path d="M24 17.5 H69" stroke="#f03030" stroke-width="1"/><path d="M24 17.5 V44" stroke="#f03030" stroke-width="1"/><circle cx="24" cy="17.5" r="1.4" fill="#c0c0c0" stroke="#f03030" stroke-width="0.8"/><circle cx="24" cy="44" r="1.5" fill="#f02020"/><path d="M46 31.8 H289" stroke="#1848e0" stroke-width="1.2"/><path d="M46 31.8 V44" stroke="#2030f0" stroke-width="1"/><circle cx="46" cy="31.8" r="1.4" fill="#c0c0c0" stroke="#2030f0" stroke-width="0.8"/><circle cx="46" cy="44" r="1.5" fill="#1010f0"/><path d="M117 12.4 L128.1 17.5 L117 23 Z M139.3 12.4 L128.1 17.5 L139.3 23 Z" fill="#fff" stroke="#222" stroke-width="0.6"/><path d="M117 26.5 L128.1 31.8 L117 37.1 Z M139.3 26.5 L128.1 31.8 L139.3 37.1 Z" fill="#fff" stroke="#222" stroke-width="0.6"/><path d="M128.1 17.5 L133.5 8.1 M129.2 5.2 L137.2 10.2 M128.1 31.8 L122.5 41 M117.5 37.4 L127 43.7" stroke="#111" stroke-width="0.7" fill="none"/><path d="M165.9 11.3 L172.5 17.5 L165.9 23.5 Z" fill="#f01010"/><path d="M194.8 25.8 L188.4 31.8 L194.8 37.3 Z" fill="#1010f0"/><path d="M151.2 -2 L156 17.5" stroke="#222" stroke-width="0.65"/></svg>
<svg style="position:absolute;left:485px;top:296px;" width="28" height="48" viewBox="0 0 28 48"><path d="M6 5.5 L21 41" stroke="#e8e070" stroke-opacity="0.6" stroke-width="6" stroke-linecap="round"/><path d="M6 5.5 L21 41" stroke="#d4c030" stroke-width="2.2" stroke-linecap="round"/></svg>
<svg style="position:absolute;left:506px;top:344px;" width="12" height="11" viewBox="0 0 12 11"><rect x="1.5" y="1.5" width="8" height="8" fill="none" stroke="#8ab8e8" stroke-width="0.8"/><path d="M1 1 L10 10 M10 1 L1 10" stroke="#a8d0f8" stroke-width="1.4"/><path d="M3 5.5 h5 M5.5 3 v5" stroke="#4a88d0" stroke-width="0.7"/></svg>
<div style="left:472.5px;top:214.60px;font-size:24px;line-height:28.80px;color:#111;font-weight:400;white-space:nowrap;font-family:'Liberation Serif', serif;">DN=28 x 1,5</div>
<div style="left:472.5px;top:241.60px;font-size:24px;line-height:28.80px;color:#111;font-weight:400;white-space:nowrap;font-family:'Liberation Serif', serif;">7348 Вт</div>
<svg style="position:absolute;left:460px;top:240px;" width="20" height="50" viewBox="0 0 20 50"><path d="M5.5 3 L17 48" stroke="#222" stroke-width="0.65"/></svg>
<div style="left:513.5px;top:306.60px;font-size:24px;line-height:28.80px;color:#111;font-weight:400;white-space:nowrap;font-family:'Liberation Serif', serif;">DN=28 x</div>
<div style="left:516.5px;top:333.60px;font-size:24px;line-height:28.80px;color:#111;font-weight:400;white-space:nowrap;font-family:'Liberation Serif', serif;">7348 Вт</div>
<div style="left:18px;top:441px;width:592px;height:13px;background:#f0f0f0;"></div>
<div style="left:18px;top:441px;width:96px;height:13px;background:#e6e6e6;"></div>
<div style="left:18px;top:441.5px;width:95.5px;height:12.5px;border:1px solid #d4d4d4;"></div>
<svg style="position:absolute;left:19px;top:442px;" width="22" height="12" viewBox="0 0 22 12"><rect x="0.5" y="0" width="8" height="11.5" fill="#eef5fc"/><path d="M4.5 2 L7 5 H5.5 V10 H3.5 V5 H2 Z" fill="#1a70e0" stroke="#0a4aa0" stroke-width="0.4"/><path d="M15.5 10 L18 7 H16.5 V2 H14.5 V7 H13 Z" fill="#c8c8c8" stroke="#999" stroke-width="0.4"/></svg>
<div style="left:40px;top:441px;width:74px;height:13px;background:#e2e2e2;border-left:1px solid #d0d0d0;"></div>
<svg style="position:absolute;left:64px;top:443px;" width="10" height="10" viewBox="0 0 10 10"><rect x="0.5" y="0.5" width="9" height="9" fill="#f4f4f4" stroke="#888" stroke-width="0.6"/><path d="M1 4 h4 l2 -2 M1 6 h7" stroke="#c8a060" stroke-width="1.1" fill="none"/><path d="M3 8.5 L9 2.5" stroke="#666" stroke-width="0.5"/></svg>
<div style="left:76px;top:444.12px;font-size:7.3px;line-height:8.76px;color:#333;font-weight:400;white-space:nowrap;">0</div>
<svg style="position:absolute;left:105.5px;top:446.3px;" width="5" height="3" viewBox="0 0 5 3"><path d="M0.7 0.6 L2.5 2.4 L4.3 0.6" fill="none" stroke="#333" stroke-width="0.9"/></svg>
<div style="left:321.5px;top:441px;width:37.5px;height:13px;background:#f6f6f6;border-left:1px solid #e0e0e0;"></div>
<svg style="position:absolute;left:353.0px;top:448px;" width="6" height="6" viewBox="0 0 6 6"><path d="M0 6 L6 0" stroke="#c8c8c8" stroke-width="0.8"/></svg>
<svg style="position:absolute;left:324.0px;top:444px;" width="6" height="8" viewBox="0 0 6 8"><circle cx="3" cy="2.8" r="2" fill="#f8c030"/><rect x="2.2" y="4.6" width="1.6" height="2.4" fill="#d89010"/></svg>
<div style="left:332.0px;top:444.00px;font-size:7px;line-height:8.40px;color:#333;font-weight:400;white-space:nowrap;">Основа</div>
<div style="left:359px;top:441px;width:58px;height:13px;background:#f6f6f6;border-left:1px solid #e0e0e0;"></div>
<svg style="position:absolute;left:411px;top:448px;" width="6" height="6" viewBox="0 0 6 6"><path d="M0 6 L6 0" stroke="#c8c8c8" stroke-width="0.8"/></svg>
<svg style="position:absolute;left:361.5px;top:444px;" width="6" height="8" viewBox="0 0 6 8"><circle cx="3" cy="2.8" r="2" fill="#f8c030"/><rect x="2.2" y="4.6" width="1.6" height="2.4" fill="#d89010"/></svg>
<div style="left:369.5px;top:444.00px;font-size:7px;line-height:8.40px;color:#333;font-weight:400;white-space:nowrap;">Конструкция</div>
<div style="left:417px;top:441px;width:68px;height:13px;background:#f6f6f6;border-left:1px solid #e0e0e0;"></div>
<svg style="position:absolute;left:479px;top:448px;" width="6" height="6" viewBox="0 0 6 6"><path d="M0 6 L6 0" stroke="#c8c8c8" stroke-width="0.8"/></svg>
<svg style="position:absolute;left:419.5px;top:444px;" width="6" height="8" viewBox="0 0 6 8"><circle cx="3" cy="2.8" r="2" fill="#f8c030"/><rect x="2.2" y="4.6" width="1.6" height="2.4" fill="#d89010"/></svg>
<div style="left:427.5px;top:444.00px;font-size:7px;line-height:8.40px;color:#333;font-weight:400;white-space:nowrap;">Конвекционное</div>
<div style="left:485px;top:441px;width:82.5px;height:13px;background:#e6eee6;border-left:1px solid #e0e0e0;"></div>
<svg style="position:absolute;left:561.5px;top:448px;" width="6" height="6" viewBox="0 0 6 6"><path d="M0 6 L6 0" stroke="#c8c8c8" stroke-width="0.8"/></svg>
<svg style="position:absolute;left:487.5px;top:444px;" width="6" height="8" viewBox="0 0 6 8"><circle cx="3" cy="2.8" r="2" fill="#f8c030"/><rect x="2.2" y="4.6" width="1.6" height="2.4" fill="#d89010"/></svg>
<div style="left:495.5px;top:444.00px;font-size:7px;line-height:8.40px;color:#333;font-weight:700;white-space:nowrap;">Поверхн.-пол,стены</div>
<div style="left:567.5px;top:441px;width:42.5px;height:13px;background:#f6f6f6;border-left:1px solid #e0e0e0;"></div>
<svg style="position:absolute;left:604.0px;top:448px;" width="6" height="6" viewBox="0 0 6 6"><path d="M0 6 L6 0" stroke="#c8c8c8" stroke-width="0.8"/></svg>
<svg style="position:absolute;left:569.5px;top:443.5px;" width="9" height="8" viewBox="0 0 9 8"><path d="M1 7 L8 1 M1 1 L8 7" stroke="#e02020" stroke-width="2.2"/></svg>
<div style="left:578.0px;top:444.00px;font-size:7px;line-height:8.40px;color:#333;font-weight:400;white-space:nowrap;">Петли-пол</div>
<div style="left:610px;top:441px;width:3px;height:13px;background:#f0f0f0;"></div>
<div style="left:18px;top:454px;width:592px;height:14px;background:#0a74d1;"></div>
<div style="left:36px;top:457.34px;font-size:6.6px;line-height:7.92px;color:#ffffff;font-weight:400;white-space:nowrap;">0,091; -5,017; 154,012</div>
<div style="left:0px;top:468px;width:900px;height:21px;background:#eeeeee;"></div>
<svg style="position:absolute;left:19px;top:472px;" width="10" height="12" viewBox="0 0 10 12"><rect x="1" y="0.5" width="7" height="10" fill="#fafafa" stroke="#888" stroke-width="0.7"/><circle cx="7" cy="9.5" r="2.5" fill="#e02020"/></svg>
<div style="left:30px;top:474.30px;font-size:7px;line-height:8.40px;color:#444;font-weight:400;white-space:nowrap;">Диагностика</div>
<svg style="position:absolute;left:72px;top:474.5px;" width="16" height="9" viewBox="0 0 16 9"><path d="M2.5 5.5 V8 M0.5 5.5 H4.5" stroke="#333" stroke-width="0.9"/><rect x="1" y="1" width="3" height="4.5" fill="none" stroke="#333" stroke-width="1"/><path d="M7.5 1.5 L13 7 M13 1.5 L7.5 7" stroke="#333" stroke-width="1"/></svg>
<div style="left:610px;top:77px;width:3px;height:393px;background:#e8e8e8;"></div>
<div style="left:613px;top:80px;width:268px;height:390px;background:#ffffff;border:1px solid #d8d8d8;"></div>
<div style="left:613px;top:80px;width:268px;height:19px;background:#f3f3f3;border:1px solid #d8d8d8;"></div>
<svg style="position:absolute;left:617.0px;top:88.0px;" width="5" height="3" viewBox="0 0 5 3"><path d="M0.7 0.6 L2.5 2.4 L4.3 0.6" fill="none" stroke="#333" stroke-width="0.9"/></svg>
<div style="left:602.5px;top:82.92px;width:300px;text-align:center;font-size:7.3px;line-height:8.76px;color:#333;font-weight:400;white-space:nowrap;">1* Участок</div>
<div style="left:614px;top:99px;width:257px;height:154.5px;background:#efefef;"></div>
<div style="left:871px;top:99px;width:9px;height:325px;background:#ffffff;"></div>
<svg style="position:absolute;left:872px;top:101px;" width="7" height="5" viewBox="0 0 7 5"><path d="M0.8 4 L3.5 1.2 L6.2 4" fill="none" stroke="#888" stroke-width="0.9"/></svg>
<svg style="position:absolute;left:872px;top:416px;" width="7" height="5" viewBox="0 0 7 5"><path d="M0.8 1 L3.5 3.8 L6.2 1" fill="none" stroke="#888" stroke-width="0.9"/></svg>
<svg style="position:absolute;left:616.5px;top:102.7px;" width="5" height="6" viewBox="0 0 5 6"><path d="M1 0.8 L3.4 3 L1 5.2" fill="none" stroke="#333" stroke-width="1"/></svg>
<div style="left:623.8px;top:100.90px;font-size:8px;line-height:9.60px;color:#707070;font-weight:400;white-space:nowrap;">Идентификация элемента</div>
<svg style="position:absolute;left:616.5px;top:114.7px;" width="5" height="6" viewBox="0 0 5 6"><path d="M1 0.8 L3.4 3 L1 5.2" fill="none" stroke="#333" stroke-width="1"/></svg>
<div style="left:623.8px;top:112.90px;font-size:8px;line-height:9.60px;color:#707070;font-weight:400;white-space:nowrap;">Позиция</div>
<svg style="position:absolute;left:616.5px;top:126.69999999999999px;" width="5" height="6" viewBox="0 0 5 6"><path d="M1 0.8 L3.4 3 L1 5.2" fill="none" stroke="#333" stroke-width="1"/></svg>
<div style="left:623.8px;top:124.90px;font-size:8px;line-height:9.60px;color:#707070;font-weight:400;white-space:nowrap;">Технич.данные</div>
<svg style="position:absolute;left:616.5px;top:138.7px;" width="5" height="6" viewBox="0 0 5 6"><path d="M1 0.8 L3.4 3 L1 5.2" fill="none" stroke="#333" stroke-width="1"/></svg>
<div style="left:623.8px;top:136.90px;font-size:8px;line-height:9.60px;color:#707070;font-weight:400;white-space:nowrap;">Отопление</div>
<svg style="position:absolute;left:616.5px;top:150.7px;" width="5" height="6" viewBox="0 0 5 6"><path d="M1 0.8 L3.4 3 L1 5.2" fill="none" stroke="#333" stroke-width="1"/></svg>
<div style="left:623.8px;top:148.90px;font-size:8px;line-height:9.60px;color:#707070;font-weight:400;white-space:nowrap;">Вид 2D/3D</div>
<svg style="position:absolute;left:616.0px;top:164.2px;" width="5" height="3" viewBox="0 0 5 3"><path d="M0.7 0.6 L2.5 2.4 L4.3 0.6" fill="none" stroke="#333" stroke-width="0.9"/></svg>
<div style="left:623.8px;top:160.90px;font-size:8px;line-height:9.60px;color:#707070;font-weight:400;white-space:nowrap;">Метка[1]</div>
<div style="left:619px;top:173.5px;width:252px;height:68px;background:#ffffff;"></div>
<div style="left:619px;top:173.5px;width:123px;height:12.5px;background:#dcdcdc;"></div>
<div style="left:742px;top:173.5px;width:129px;height:12.5px;background:#deeefa;"></div>
<div style="left:619px;top:186px;width:252px;height:1px;background:#ececec;"></div>
<div style="left:619px;top:199.5px;width:252px;height:1px;background:#ececec;"></div>
<div style="left:619px;top:213.5px;width:252px;height:1px;background:#ececec;"></div>
<div style="left:619px;top:227.5px;width:252px;height:1px;background:#ececec;"></div>
<div style="left:742px;top:173.5px;width:1px;height:68px;background:#ececec;"></div>
<div style="left:624.3px;top:175.30px;font-size:7px;line-height:8.40px;color:#222;font-weight:400;white-space:nowrap;">Стиль элемента</div>
<div style="left:624.3px;top:189.30px;font-size:7px;line-height:8.40px;color:#222;font-weight:400;white-space:nowrap;">Вид этикетки</div>
<div style="left:624.3px;top:203.20px;font-size:7px;line-height:8.40px;color:#222;font-weight:400;white-space:nowrap;">Δx</div>
<div style="left:624.3px;top:217.00px;font-size:7px;line-height:8.40px;color:#222;font-weight:400;white-space:nowrap;">Δy</div>
<div style="left:624.3px;top:231.30px;font-size:7px;line-height:8.40px;color:#222;font-weight:400;white-space:nowrap;">Угол поворота</div>
<div style="left:744px;top:175.18px;font-size:7.2px;line-height:8.64px;color:#4a55a8;font-weight:400;white-space:nowrap;">Pipe-run -label</div>
<div style="left:744px;top:189.18px;font-size:7.2px;line-height:8.64px;color:#333;font-weight:400;white-space:nowrap;">Плавающий ярлык</div>
<div style="left:744px;top:203.08px;font-size:7.2px;line-height:8.64px;color:#333;font-weight:400;white-space:nowrap;">0,09</div>
<div style="left:744px;top:216.88px;font-size:7.2px;line-height:8.64px;color:#333;font-weight:400;white-space:nowrap;">-0,22</div>
<div style="left:744px;top:231.18px;font-size:7.2px;line-height:8.64px;color:#333;font-weight:400;white-space:nowrap;">0°</div>
<svg style="position:absolute;left:854.5px;top:178.1px;" width="5" height="3" viewBox="0 0 5 3"><path d="M0.7 0.6 L2.5 2.4 L4.3 0.6" fill="none" stroke="#222" stroke-width="0.9"/></svg>
<svg style="position:absolute;left:854.5px;top:191.9px;" width="5" height="3" viewBox="0 0 5 3"><path d="M0.7 0.6 L2.5 2.4 L4.3 0.6" fill="none" stroke="#222" stroke-width="0.9"/></svg>
<svg style="position:absolute;left:854.5px;top:233.7px;" width="5" height="3" viewBox="0 0 5 3"><path d="M0.7 0.6 L2.5 2.4 L4.3 0.6" fill="none" stroke="#222" stroke-width="0.9"/></svg>
<svg style="position:absolute;left:862.5px;top:175.5px;" width="9" height="8" viewBox="0 0 9 8"><rect x="0.5" y="0.5" width="7" height="5.5" fill="#5ab0e8" stroke="#2a80c8" stroke-width="0.6"/><rect x="4" y="3" width="4.5" height="4.5" fill="#2a70b8"/></svg>
<div style="left:709.5px;top:203.54px;width:300px;text-align:center;font-size:6.6px;line-height:7.92px;color:#555;font-weight:400;white-space:nowrap;">м</div>
<div style="left:709.5px;top:217.34px;width:300px;text-align:center;font-size:6.6px;line-height:7.92px;color:#555;font-weight:400;white-space:nowrap;">м</div>
<svg style="position:absolute;left:864px;top:203px;" width="8" height="8" viewBox="0 0 8 8"><path d="M1.2 6.8 L6.5 1.5" stroke="#e8a020" stroke-width="1.8"/><path d="M1.2 6.8 L0.8 7.5" stroke="#555" stroke-width="1"/><path d="M5.8 2.2 L6.8 1.2" stroke="#c05030" stroke-width="1.8"/></svg>
<svg style="position:absolute;left:864px;top:217px;" width="8" height="8" viewBox="0 0 8 8"><path d="M1.2 6.8 L6.5 1.5" stroke="#e8a020" stroke-width="1.8"/><path d="M1.2 6.8 L0.8 7.5" stroke="#555" stroke-width="1"/><path d="M5.8 2.2 L6.8 1.2" stroke="#c05030" stroke-width="1.8"/></svg>
<svg style="position:absolute;left:864px;top:231px;" width="8" height="8" viewBox="0 0 8 8"><path d="M1.2 6.8 L6.5 1.5" stroke="#e8a020" stroke-width="1.8"/><path d="M1.2 6.8 L0.8 7.5" stroke="#555" stroke-width="1"/><path d="M5.8 2.2 L6.8 1.2" stroke="#c05030" stroke-width="1.8"/></svg>
<div style="left:616.5px;top:172px;width:262px;height:71px;border:2px solid #e4141e;border-radius:7px;"></div>
<svg style="position:absolute;left:616.5px;top:245.7px;" width="5" height="6" viewBox="0 0 5 6"><path d="M1 0.8 L3.4 3 L1 5.2" fill="none" stroke="#333" stroke-width="1"/></svg>
<div style="left:623.8px;top:243.90px;font-size:8px;line-height:9.60px;color:#707070;font-weight:400;white-space:nowrap;">Клапан[2]</div>
<div style="left:613px;top:424px;width:268px;height:46px;background:#f7f7f7;border:1px solid #e0e0e0;"></div>
<div style="left:621px;top:432.18px;font-size:6.7px;line-height:8.04px;color:#1a1a1a;font-weight:700;white-space:nowrap;">Стиль элемента</div>
<div style="left:881px;top:77px;width:19px;height:412px;background:#f0f0f0;"></div>
<div style="left:896px;top:80px;width:4px;height:84.5px;background:#cbcbcb;"></div>
<svg style="position:absolute;left:884px;top:80px;" width="11" height="10" viewBox="0 0 11 10"><rect x="1" y="0.5" width="9" height="8" fill="#f8f0f0" stroke="#ccc" stroke-width="0.5"/><path d="M1 2.5 h9" stroke="#e05050" stroke-width="1.2"/><path d="M2 9 L7 4" stroke="#e8a020" stroke-width="1.8"/></svg>
<svg style="position:absolute;left:887px;top:91px;" width="5" height="5" viewBox="0 0 5 5"><circle cx="2.5" cy="2.5" r="1.5" fill="#333"/></svg>
<div style="left:894.5px;top:97.5px;transform-origin:0 0;transform:rotate(90deg);font-size:6.9px;line-height:8px;color:#555;white-space:nowrap;">Таблица данных</div>
<svg style="position:absolute;left:886px;top:152px;" width="7" height="5" viewBox="0 0 7 5"><path d="M0.3 2.5 H2.5 M2.5 0.5 V4.5" stroke="#333" stroke-width="0.9"/><rect x="2.5" y="1" width="3.6" height="3" fill="none" stroke="#333" stroke-width="1"/></svg>
<svg style="position:absolute;left:886.5px;top:158.8px;" width="6.5" height="6.5" viewBox="0 0 6.5 6.5"><path d="M0.5 0.5 L6 6 M6 0.5 L0.5 6" stroke="#333" stroke-width="1"/></svg>
<div style="left:90px;top:76px;width:131px;height:43.5px;background:#f0f0f0;border:1px solid #cccccc;box-shadow:1px 1px 2px rgba(0,0,0,0.18);"></div>
<div style="left:95px;top:77px;width:23px;height:42.5px;background:#a6d8f5;"></div>
<svg style="position:absolute;left:96px;top:81px;" width="21" height="12" viewBox="0 0 21 12"><path d="M0.8 1.5 L7 7.5" stroke="#666" stroke-width="0.7"/><rect x="7.5" y="4.5" width="12.5" height="6.5" rx="1.2" fill="#ffffff" stroke="#999" stroke-width="0.7"/><path d="M11 8 h5.5" stroke="#aaa" stroke-width="0.6" stroke-dasharray="0.8 0.8"/></svg>
<div style="left:-43.5px;top:100.12px;width:300px;text-align:center;font-size:7.3px;line-height:8.76px;color:#2a5a98;font-weight:400;white-space:nowrap;">Метка</div>
<svg style="position:absolute;left:104.0px;top:111.8px;" width="5" height="3" viewBox="0 0 5 3"><path d="M0.7 0.6 L2.5 2.4 L4.3 0.6" fill="none" stroke="#333" stroke-width="0.9"/></svg>
<svg style="position:absolute;left:144px;top:79px;" width="22" height="17" viewBox="0 0 22 17"><text x="11" y="5.2" text-anchor="middle" font-size="5.2" fill="#999" font-style="italic" font-family="Liberation Sans">2.0</text><path d="M2.5 6 V15.5 M18.5 6 V15.5" stroke="#3a88e8" stroke-width="0.8"/><path d="M3 8 H18" stroke="#3a88e8" stroke-width="0.9"/><path d="M3 8 L6 6.6 L6 9.4 Z M18 8 L15 6.6 L15 9.4 Z" fill="#3a88e8"/></svg>
<div style="left:4.5px;top:100.18px;width:300px;text-align:center;font-size:7.2px;line-height:8.64px;color:#444;font-weight:400;white-space:nowrap;">Горизонт.размерная</div>
<div style="left:2px;top:108.68px;width:300px;text-align:center;font-size:7.2px;line-height:8.64px;color:#444;font-weight:400;white-space:nowrap;">линия</div>
<svg style="position:absolute;left:163.0px;top:112.0px;" width="5" height="3" viewBox="0 0 5 3"><path d="M0.7 0.6 L2.5 2.4 L4.3 0.6" fill="none" stroke="#555" stroke-width="0.9"/></svg>
<div style="left:192.5px;top:85.14px;font-size:5.6px;line-height:6.72px;color:#3a9ae8;font-weight:400;white-space:nowrap;letter-spacing:-0.2px;">Abc</div>
<svg style="position:absolute;left:206.0px;top:87.0px;" width="5" height="3" viewBox="0 0 5 3"><path d="M0.7 0.6 L2.5 2.4 L4.3 0.6" fill="none" stroke="#444" stroke-width="0.9"/></svg>
<svg style="position:absolute;left:192px;top:102px;" width="11" height="10" viewBox="0 0 11 10"><rect x="0.5" y="0.5" width="9.5" height="8.5" fill="#f8f8f8" stroke="#aaa" stroke-width="0.6"/><path d="M0.5 3 h9.5 M0.5 5.5 h9.5 M3.5 0.5 v8.5 M6.5 0.5 v8.5" stroke="#c8c8c8" stroke-width="0.5"/></svg>
<svg style="position:absolute;left:205px;top:102px;" width="9" height="10" viewBox="0 0 9 10"><path d="M0.5 0.5 H5.5 L8.5 3.5 V9.5 H0.5 Z" fill="#f8f040" stroke="#666" stroke-width="0.6"/></svg>
<div style="left:90px;top:118px;width:5px;height:14px;background:#ececec;border-left:1px solid #d0d0d0;border-bottom:1px solid #d0d0d0;"></div>
<div style="left:94.5px;top:119.5px;width:219px;height:249.5px;background:#ffffff;border:1px solid #d8d8d8;box-shadow:1px 1px 2px rgba(0,0,0,0.12);"></div>
<div style="left:105.3px;top:124.10px;font-size:7px;line-height:8.40px;color:#222;font-weight:700;white-space:nowrap;">Вставка</div>
<div style="left:95.5px;top:135.5px;width:217px;height:25.5px;background:#c5e4f7;"></div>
<svg style="position:absolute;left:101.5px;top:143px;" width="21" height="10" viewBox="0 0 21 10"><path d="M1 0.5 L6.8 5.6 H9" fill="none" stroke="#888" stroke-width="0.7"/><rect x="9" y="2.8" width="10" height="5.8" fill="#fff" stroke="#8a8a8a" stroke-width="0.8"/><path d="M12 6.3 h4.5" stroke="#bbb" stroke-width="0.5" stroke-dasharray="0.8 0.8"/></svg>
<div style="left:134px;top:143.60px;font-size:7px;line-height:8.40px;color:#222;font-weight:700;white-space:nowrap;">Плавающий ярлык</div>
<svg style="position:absolute;left:101.5px;top:169px;" width="20" height="10" viewBox="0 0 20 10"><path d="M4.5 2.2 h12 M4.5 4.4 h12 M4.5 6.6 h12" stroke="#999" stroke-width="0.6" stroke-dasharray="1.4 0.6"/><path d="M4.5 8.3 h4" stroke="#8aaad0" stroke-width="0.6"/></svg>
<div style="left:134px;top:170.00px;font-size:7px;line-height:8.40px;color:#222;font-weight:700;white-space:nowrap;">Упрощенный ярлык</div>
<svg style="position:absolute;left:101.5px;top:195.5px;" width="21" height="10" viewBox="0 0 21 10"><path d="M1.5 5.5 H8.5" stroke="#666" stroke-width="0.7"/><rect x="8.5" y="2.3" width="11" height="6.4" fill="#fff" stroke="#888" stroke-width="0.7"/><path d="M12 6.5 h4.5" stroke="#aaa" stroke-width="0.6" stroke-dasharray="0.8 0.8"/></svg>
<div style="left:134px;top:196.40px;font-size:7px;line-height:8.40px;color:#222;font-weight:700;white-space:nowrap;">Перпендикулярный ярлык</div>
<div style="left:103px;top:220.34px;font-size:11.6px;line-height:13.92px;color:#3aa8f0;font-weight:400;white-space:nowrap;letter-spacing:-0.6px;">Abc</div>
<div style="left:134px;top:222.60px;font-size:7px;line-height:8.40px;color:#222;font-weight:700;white-space:nowrap;">Текст</div>
<svg style="position:absolute;left:105px;top:245.5px;" width="14" height="15.5" viewBox="0 0 14 15.5"><path d="M0.6 0.6 H8 L13.2 5.8 V14.8 H0.6 Z" fill="#f8ec30" stroke="#555" stroke-width="0.9"/><path d="M8 0.6 V5.8 H13.2" fill="#d8c820" stroke="#555" stroke-width="0.6"/></svg>
<div style="left:134px;top:248.90px;font-size:7px;line-height:8.40px;color:#222;font-weight:700;white-space:nowrap;">Примечание</div>
<div style="left:95.5px;top:269.5px;width:217px;height:1px;background:#e4e4e4;"></div>
<div style="left:105.6px;top:275.15px;font-size:6.75px;line-height:8.10px;color:#222;font-weight:700;white-space:nowrap;">Вставить во все выбранные компоненты</div>
<svg style="position:absolute;left:101.5px;top:293.8px;" width="21" height="10" viewBox="0 0 21 10"><path d="M1 0.5 L6.8 5.6 H9" fill="none" stroke="#888" stroke-width="0.7"/><rect x="9" y="2.8" width="10" height="5.8" fill="#fff" stroke="#8a8a8a" stroke-width="0.8"/><path d="M12 6.3 h4.5" stroke="#bbb" stroke-width="0.5" stroke-dasharray="0.8 0.8"/></svg>
<div style="left:134px;top:294.10px;font-size:7px;line-height:8.40px;color:#222;font-weight:700;white-space:nowrap;">Плавающий ярлык</div>
<svg style="position:absolute;left:101.5px;top:319.8px;" width="20" height="10" viewBox="0 0 20 10"><path d="M4.5 2.2 h12 M4.5 4.4 h12 M4.5 6.6 h12" stroke="#999" stroke-width="0.6" stroke-dasharray="1.4 0.6"/><path d="M4.5 8.3 h4" stroke="#8aaad0" stroke-width="0.6"/></svg>
<div style="left:134px;top:320.50px;font-size:7px;line-height:8.40px;color:#222;font-weight:700;white-space:nowrap;">Упрощенный ярлык</div>
<svg style="position:absolute;left:101.5px;top:346.3px;" width="21" height="10" viewBox="0 0 21 10"><path d="M1.5 5.5 H8.5" stroke="#666" stroke-width="0.7"/><rect x="8.5" y="2.3" width="11" height="6.4" fill="#fff" stroke="#888" stroke-width="0.7"/><path d="M12 6.5 h4.5" stroke="#aaa" stroke-width="0.6" stroke-dasharray="0.8 0.8"/></svg>
<div style="left:134px;top:347.00px;font-size:7px;line-height:8.40px;color:#222;font-weight:700;white-space:nowrap;">Перпендикулярный ярлык</div>
<div style="left:0px;top:488px;width:900px;height:1px;background:#a0a0a0;"></div>
<div style="left:18px;top:485px;width:67px;height:4px;background:#c8c8c8;"></div>
<div style="left:0px;top:488px;width:27px;height:1px;background:#555;"></div>
</body></html>
